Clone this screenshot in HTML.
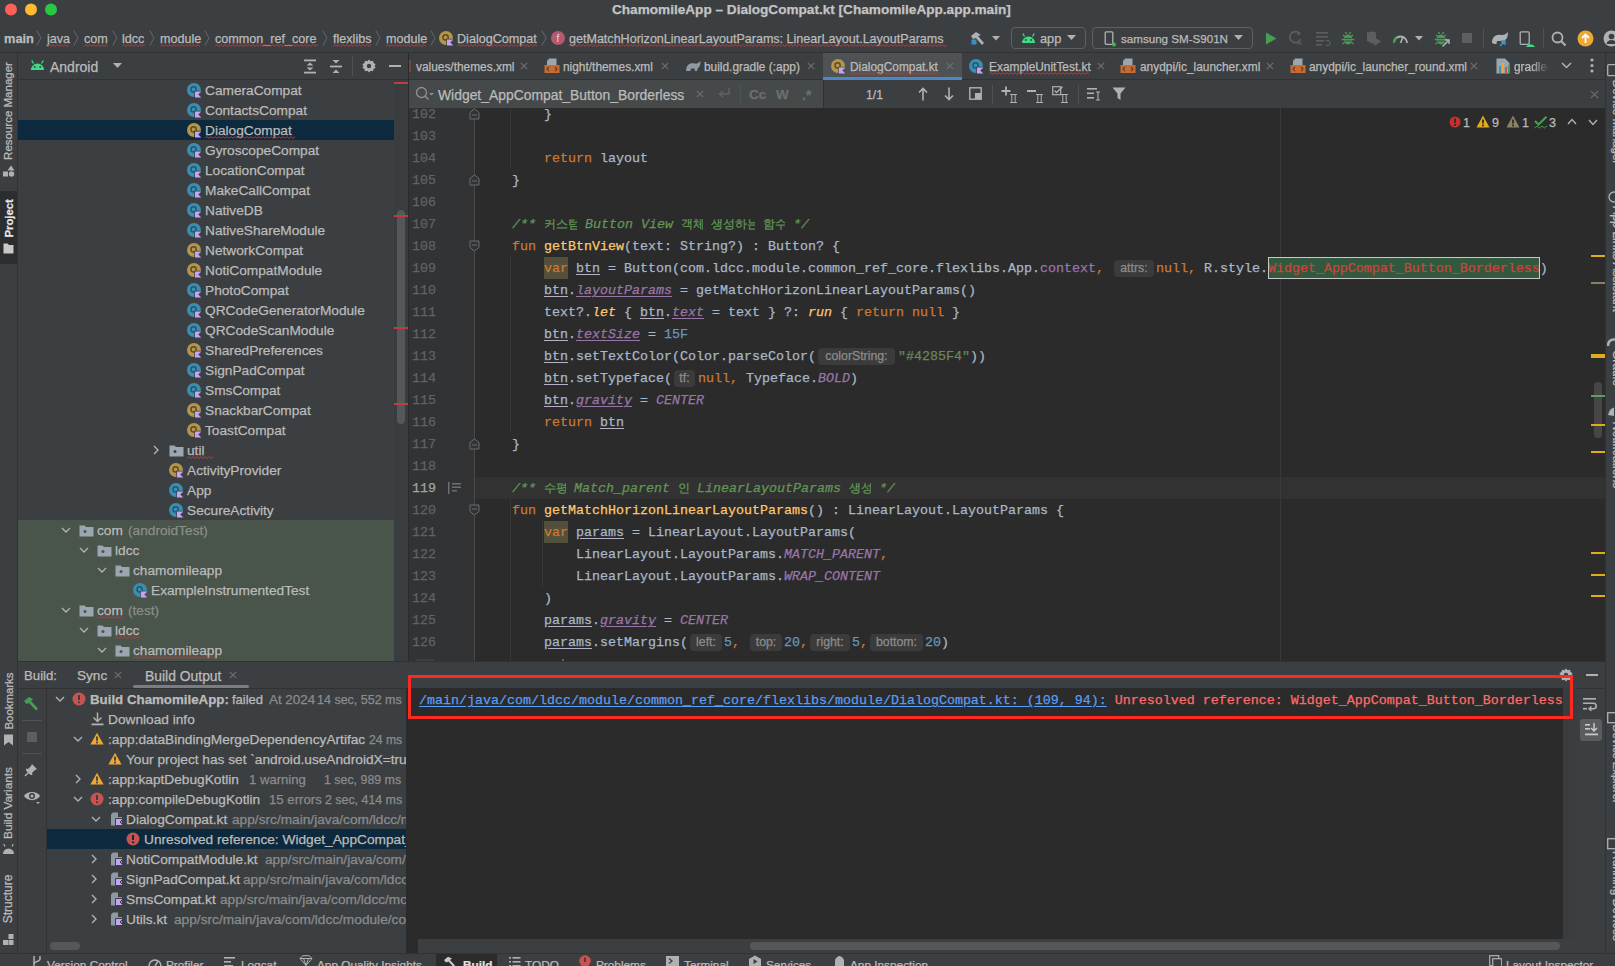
<!DOCTYPE html>
<html><head><meta charset="utf-8"><style>
html,body{margin:0;padding:0}
body{width:1615px;height:966px;overflow:hidden;position:relative;background:#3C3F41;font-family:"Liberation Sans",sans-serif}
body>div,body>svg{position:absolute}
body>div{-webkit-text-stroke:0.25px currentColor}
</style></head><body>
<div style="left:0px;top:52px;width:1615px;height:1px;background:#323232;"></div>
<div style="left:17px;top:53px;width:1px;height:900px;background:#323232;"></div>
<div style="left:18px;top:79px;width:390px;height:1px;background:#323232;"></div>
<div style="left:408px;top:53px;width:1px;height:608px;background:#2B2B2B;"></div>
<div style="left:409px;top:79px;width:1196px;height:1px;background:#323232;"></div>
<div style="left:409px;top:80px;width:414px;height:28px;background:#45494A;"></div>
<div style="left:823px;top:80px;width:1px;height:28px;background:#2F3133;"></div>
<div style="left:409px;top:108px;width:66px;height:553px;background:#313335;"></div>
<div style="left:475px;top:108px;width:1130px;height:553px;background:#2B2B2B;"></div>
<div style="left:1605px;top:53px;width:1px;height:900px;background:#323232;"></div>
<div style="left:18px;top:661px;width:1587px;height:1px;background:#323232;"></div>
<div style="left:46px;top:688px;width:1px;height:265px;background:#323232;"></div>
<div style="left:18px;top:688px;width:1588px;height:1px;background:#323232;"></div>
<div style="left:406px;top:688px;width:1157px;height:251px;background:#2B2B2B;"></div>
<div style="left:406px;top:939px;width:12px;height:14px;background:#2B2B2B;"></div>
<div style="left:1563px;top:688px;width:14px;height:251px;background:#3A3D3F;"></div>
<div style="left:0px;top:953px;width:1615px;height:1px;background:#323232;"></div>
<div style="left:436px;top:954px;width:61px;height:12px;background:#2B2B2B;"></div>
<svg style="left:30px;top:59px;" width="15" height="12" viewBox="0 0 15 12"><path d="M1 11 A6.5 6.5 0 0 1 14 11 Z" fill="#3DDC84"/><path d="M3.5 4.5 L1.8 1.5 M11.5 4.5 L13.2 1.5" stroke="#3DDC84" stroke-width="1.3"/><circle cx="4.8" cy="8" r="0.9" fill="#3C3F41"/><circle cx="10.2" cy="8" r="0.9" fill="#3C3F41"/></svg>
<div style="left:50px;top:57.0px;height:20px;line-height:20px;font-size:14px;color:#BBBBBB;font-weight:normal;font-family:'Liberation Sans', sans-serif;white-space:pre;">Android</div>
<svg style="left:113px;top:63px;" width="10" height="6" viewBox="0 0 10 6"><path d="M0 0 H9 L4.5 5 Z" fill="#AFB1B3"/></svg>
<svg style="left:303px;top:59px;" width="14" height="15" viewBox="0 0 14 15"><rect x="1" y="0.5" width="12" height="1.8" fill="#AFB1B3"/><rect x="1" y="12.7" width="12" height="1.8" fill="#AFB1B3"/><path d="M3.5 6.5 L7 3.5 L10.5 6.5 Z M3.5 8.5 L7 11.5 L10.5 8.5 Z" fill="#AFB1B3"/></svg>
<svg style="left:329px;top:59px;" width="14" height="15" viewBox="0 0 14 15"><rect x="1" y="6.6" width="12" height="1.8" fill="#AFB1B3"/><path d="M3.5 1 H10.5 L7 4.5 Z M3.5 14 H10.5 L7 10.5 Z" fill="#AFB1B3"/></svg>
<div style="left:352px;top:56px;width:1px;height:20px;background:#4E5254;"></div>
<svg style="left:362px;top:59px;" width="14" height="14" viewBox="0 0 14 14"><path d="M7 0.5 L8.6 2.2 L10.9 1.7 L11.6 4 L13.6 5.2 L12.6 7 L13.6 8.8 L11.6 10 L10.9 12.3 L8.6 11.8 L7 13.5 L5.4 11.8 L3.1 12.3 L2.4 10 L0.4 8.8 L1.4 7 L0.4 5.2 L2.4 4 L3.1 1.7 L5.4 2.2 Z" fill="#AFB1B3"/><circle cx="7" cy="7" r="2.2" fill="#3C3F41"/></svg>
<div style="left:389px;top:65px;width:12px;height:2px;background:#AFB1B3;"></div>
<div style="left:18px;top:120px;width:376px;height:20px;background:#0D293E;"></div>
<div style="left:18px;top:520px;width:376px;height:141px;background:#49544A;"></div>
<svg style="left:187px;top:83px;" width="16" height="16" viewBox="0 0 16 16"><circle cx="7" cy="7" r="7" fill="#3B8EB3"/><circle cx="6.6" cy="6.4" r="2.6" fill="none" stroke="#24566B" stroke-width="1.4"/><path d="M7.3 7.7 H15.8 L12.2 11.4 L15.8 15.2 H7.3 Z" fill="#3C3F41"/><path d="M8 8.4 H14.4 L11.2 11.4 L14.4 14.6 H8 Z" fill="#C7A3F7"/></svg>
<div style="left:205px;top:81.0px;height:20px;line-height:20px;font-size:13.7px;color:#BBBBBB;font-weight:normal;font-family:'Liberation Sans', sans-serif;white-space:pre;">CameraCompat</div>
<svg style="left:187px;top:103px;" width="16" height="16" viewBox="0 0 16 16"><circle cx="7" cy="7" r="7" fill="#3B8EB3"/><circle cx="6.6" cy="6.4" r="2.6" fill="none" stroke="#24566B" stroke-width="1.4"/><path d="M7.3 7.7 H15.8 L12.2 11.4 L15.8 15.2 H7.3 Z" fill="#3C3F41"/><path d="M8 8.4 H14.4 L11.2 11.4 L14.4 14.6 H8 Z" fill="#C7A3F7"/></svg>
<div style="left:205px;top:101.0px;height:20px;line-height:20px;font-size:13.7px;color:#BBBBBB;font-weight:normal;font-family:'Liberation Sans', sans-serif;white-space:pre;">ContactsCompat</div>
<svg style="left:187px;top:123px;" width="16" height="16" viewBox="0 0 16 16"><circle cx="7" cy="7" r="7" fill="#B5954C"/><circle cx="6.6" cy="6.4" r="2.6" fill="none" stroke="#5E4B22" stroke-width="1.4"/><path d="M7.3 7.7 H15.8 L12.2 11.4 L15.8 15.2 H7.3 Z" fill="#0D293E"/><path d="M8 8.4 H14.4 L11.2 11.4 L14.4 14.6 H8 Z" fill="#C7A3F7"/></svg>
<div style="left:205px;top:121.0px;height:20px;line-height:20px;font-size:13.7px;color:#BBBBBB;font-weight:normal;font-family:'Liberation Sans', sans-serif;white-space:pre;">DialogCompat</div>
<svg style="left:187px;top:143px;" width="16" height="16" viewBox="0 0 16 16"><circle cx="7" cy="7" r="7" fill="#3B8EB3"/><circle cx="6.6" cy="6.4" r="2.6" fill="none" stroke="#24566B" stroke-width="1.4"/><path d="M7.3 7.7 H15.8 L12.2 11.4 L15.8 15.2 H7.3 Z" fill="#3C3F41"/><path d="M8 8.4 H14.4 L11.2 11.4 L14.4 14.6 H8 Z" fill="#C7A3F7"/></svg>
<div style="left:205px;top:141.0px;height:20px;line-height:20px;font-size:13.7px;color:#BBBBBB;font-weight:normal;font-family:'Liberation Sans', sans-serif;white-space:pre;">GyroscopeCompat</div>
<svg style="left:187px;top:163px;" width="16" height="16" viewBox="0 0 16 16"><circle cx="7" cy="7" r="7" fill="#3B8EB3"/><circle cx="6.6" cy="6.4" r="2.6" fill="none" stroke="#24566B" stroke-width="1.4"/><path d="M7.3 7.7 H15.8 L12.2 11.4 L15.8 15.2 H7.3 Z" fill="#3C3F41"/><path d="M8 8.4 H14.4 L11.2 11.4 L14.4 14.6 H8 Z" fill="#C7A3F7"/></svg>
<div style="left:205px;top:161.0px;height:20px;line-height:20px;font-size:13.7px;color:#BBBBBB;font-weight:normal;font-family:'Liberation Sans', sans-serif;white-space:pre;">LocationCompat</div>
<svg style="left:187px;top:183px;" width="16" height="16" viewBox="0 0 16 16"><circle cx="7" cy="7" r="7" fill="#3B8EB3"/><circle cx="6.6" cy="6.4" r="2.6" fill="none" stroke="#24566B" stroke-width="1.4"/><path d="M7.3 7.7 H15.8 L12.2 11.4 L15.8 15.2 H7.3 Z" fill="#3C3F41"/><path d="M8 8.4 H14.4 L11.2 11.4 L14.4 14.6 H8 Z" fill="#C7A3F7"/></svg>
<div style="left:205px;top:181.0px;height:20px;line-height:20px;font-size:13.7px;color:#BBBBBB;font-weight:normal;font-family:'Liberation Sans', sans-serif;white-space:pre;">MakeCallCompat</div>
<svg style="left:187px;top:203px;" width="16" height="16" viewBox="0 0 16 16"><circle cx="7" cy="7" r="7" fill="#3B8EB3"/><circle cx="6.6" cy="6.4" r="2.6" fill="none" stroke="#24566B" stroke-width="1.4"/><path d="M7.3 7.7 H15.8 L12.2 11.4 L15.8 15.2 H7.3 Z" fill="#3C3F41"/><path d="M8 8.4 H14.4 L11.2 11.4 L14.4 14.6 H8 Z" fill="#C7A3F7"/></svg>
<div style="left:205px;top:201.0px;height:20px;line-height:20px;font-size:13.7px;color:#BBBBBB;font-weight:normal;font-family:'Liberation Sans', sans-serif;white-space:pre;">NativeDB</div>
<svg style="left:187px;top:223px;" width="16" height="16" viewBox="0 0 16 16"><circle cx="7" cy="7" r="7" fill="#3B8EB3"/><circle cx="6.6" cy="6.4" r="2.6" fill="none" stroke="#24566B" stroke-width="1.4"/><path d="M7.3 7.7 H15.8 L12.2 11.4 L15.8 15.2 H7.3 Z" fill="#3C3F41"/><path d="M8 8.4 H14.4 L11.2 11.4 L14.4 14.6 H8 Z" fill="#C7A3F7"/></svg>
<div style="left:205px;top:221.0px;height:20px;line-height:20px;font-size:13.7px;color:#BBBBBB;font-weight:normal;font-family:'Liberation Sans', sans-serif;white-space:pre;">NativeShareModule</div>
<svg style="left:187px;top:243px;" width="16" height="16" viewBox="0 0 16 16"><circle cx="7" cy="7" r="7" fill="#B5954C"/><circle cx="6.6" cy="6.4" r="2.6" fill="none" stroke="#5E4B22" stroke-width="1.4"/><path d="M7.3 7.7 H15.8 L12.2 11.4 L15.8 15.2 H7.3 Z" fill="#3C3F41"/><path d="M8 8.4 H14.4 L11.2 11.4 L14.4 14.6 H8 Z" fill="#C7A3F7"/></svg>
<div style="left:205px;top:241.0px;height:20px;line-height:20px;font-size:13.7px;color:#BBBBBB;font-weight:normal;font-family:'Liberation Sans', sans-serif;white-space:pre;">NetworkCompat</div>
<svg style="left:187px;top:263px;" width="16" height="16" viewBox="0 0 16 16"><circle cx="7" cy="7" r="7" fill="#B5954C"/><circle cx="6.6" cy="6.4" r="2.6" fill="none" stroke="#5E4B22" stroke-width="1.4"/><path d="M7.3 7.7 H15.8 L12.2 11.4 L15.8 15.2 H7.3 Z" fill="#3C3F41"/><path d="M8 8.4 H14.4 L11.2 11.4 L14.4 14.6 H8 Z" fill="#C7A3F7"/></svg>
<div style="left:205px;top:261.0px;height:20px;line-height:20px;font-size:13.7px;color:#BBBBBB;font-weight:normal;font-family:'Liberation Sans', sans-serif;white-space:pre;">NotiCompatModule</div>
<svg style="left:187px;top:283px;" width="16" height="16" viewBox="0 0 16 16"><circle cx="7" cy="7" r="7" fill="#3B8EB3"/><circle cx="6.6" cy="6.4" r="2.6" fill="none" stroke="#24566B" stroke-width="1.4"/><path d="M7.3 7.7 H15.8 L12.2 11.4 L15.8 15.2 H7.3 Z" fill="#3C3F41"/><path d="M8 8.4 H14.4 L11.2 11.4 L14.4 14.6 H8 Z" fill="#C7A3F7"/></svg>
<div style="left:205px;top:281.0px;height:20px;line-height:20px;font-size:13.7px;color:#BBBBBB;font-weight:normal;font-family:'Liberation Sans', sans-serif;white-space:pre;">PhotoCompat</div>
<svg style="left:187px;top:303px;" width="16" height="16" viewBox="0 0 16 16"><circle cx="7" cy="7" r="7" fill="#3B8EB3"/><circle cx="6.6" cy="6.4" r="2.6" fill="none" stroke="#24566B" stroke-width="1.4"/><path d="M7.3 7.7 H15.8 L12.2 11.4 L15.8 15.2 H7.3 Z" fill="#3C3F41"/><path d="M8 8.4 H14.4 L11.2 11.4 L14.4 14.6 H8 Z" fill="#C7A3F7"/></svg>
<div style="left:205px;top:301.0px;height:20px;line-height:20px;font-size:13.7px;color:#BBBBBB;font-weight:normal;font-family:'Liberation Sans', sans-serif;white-space:pre;">QRCodeGeneratorModule</div>
<svg style="left:187px;top:323px;" width="16" height="16" viewBox="0 0 16 16"><circle cx="7" cy="7" r="7" fill="#3B8EB3"/><circle cx="6.6" cy="6.4" r="2.6" fill="none" stroke="#24566B" stroke-width="1.4"/><path d="M7.3 7.7 H15.8 L12.2 11.4 L15.8 15.2 H7.3 Z" fill="#3C3F41"/><path d="M8 8.4 H14.4 L11.2 11.4 L14.4 14.6 H8 Z" fill="#C7A3F7"/></svg>
<div style="left:205px;top:321.0px;height:20px;line-height:20px;font-size:13.7px;color:#BBBBBB;font-weight:normal;font-family:'Liberation Sans', sans-serif;white-space:pre;">QRCodeScanModule</div>
<svg style="left:187px;top:343px;" width="16" height="16" viewBox="0 0 16 16"><circle cx="7" cy="7" r="7" fill="#B5954C"/><circle cx="6.6" cy="6.4" r="2.6" fill="none" stroke="#5E4B22" stroke-width="1.4"/><path d="M7.3 7.7 H15.8 L12.2 11.4 L15.8 15.2 H7.3 Z" fill="#3C3F41"/><path d="M8 8.4 H14.4 L11.2 11.4 L14.4 14.6 H8 Z" fill="#C7A3F7"/></svg>
<div style="left:205px;top:341.0px;height:20px;line-height:20px;font-size:13.7px;color:#BBBBBB;font-weight:normal;font-family:'Liberation Sans', sans-serif;white-space:pre;">SharedPreferences</div>
<svg style="left:187px;top:363px;" width="16" height="16" viewBox="0 0 16 16"><circle cx="7" cy="7" r="7" fill="#3B8EB3"/><circle cx="6.6" cy="6.4" r="2.6" fill="none" stroke="#24566B" stroke-width="1.4"/><path d="M7.3 7.7 H15.8 L12.2 11.4 L15.8 15.2 H7.3 Z" fill="#3C3F41"/><path d="M8 8.4 H14.4 L11.2 11.4 L14.4 14.6 H8 Z" fill="#C7A3F7"/></svg>
<div style="left:205px;top:361.0px;height:20px;line-height:20px;font-size:13.7px;color:#BBBBBB;font-weight:normal;font-family:'Liberation Sans', sans-serif;white-space:pre;">SignPadCompat</div>
<svg style="left:187px;top:383px;" width="16" height="16" viewBox="0 0 16 16"><circle cx="7" cy="7" r="7" fill="#3B8EB3"/><circle cx="6.6" cy="6.4" r="2.6" fill="none" stroke="#24566B" stroke-width="1.4"/><path d="M7.3 7.7 H15.8 L12.2 11.4 L15.8 15.2 H7.3 Z" fill="#3C3F41"/><path d="M8 8.4 H14.4 L11.2 11.4 L14.4 14.6 H8 Z" fill="#C7A3F7"/></svg>
<div style="left:205px;top:381.0px;height:20px;line-height:20px;font-size:13.7px;color:#BBBBBB;font-weight:normal;font-family:'Liberation Sans', sans-serif;white-space:pre;">SmsCompat</div>
<svg style="left:187px;top:403px;" width="16" height="16" viewBox="0 0 16 16"><circle cx="7" cy="7" r="7" fill="#B5954C"/><circle cx="6.6" cy="6.4" r="2.6" fill="none" stroke="#5E4B22" stroke-width="1.4"/><path d="M7.3 7.7 H15.8 L12.2 11.4 L15.8 15.2 H7.3 Z" fill="#3C3F41"/><path d="M8 8.4 H14.4 L11.2 11.4 L14.4 14.6 H8 Z" fill="#C7A3F7"/></svg>
<div style="left:205px;top:401.0px;height:20px;line-height:20px;font-size:13.7px;color:#BBBBBB;font-weight:normal;font-family:'Liberation Sans', sans-serif;white-space:pre;">SnackbarCompat</div>
<svg style="left:187px;top:423px;" width="16" height="16" viewBox="0 0 16 16"><circle cx="7" cy="7" r="7" fill="#B5954C"/><circle cx="6.6" cy="6.4" r="2.6" fill="none" stroke="#5E4B22" stroke-width="1.4"/><path d="M7.3 7.7 H15.8 L12.2 11.4 L15.8 15.2 H7.3 Z" fill="#3C3F41"/><path d="M8 8.4 H14.4 L11.2 11.4 L14.4 14.6 H8 Z" fill="#C7A3F7"/></svg>
<div style="left:205px;top:421.0px;height:20px;line-height:20px;font-size:13.7px;color:#BBBBBB;font-weight:normal;font-family:'Liberation Sans', sans-serif;white-space:pre;">ToastCompat</div>
<svg style="left:205px;top:136px;" width="90" height="3" viewBox="0 0 90 3"><path d="M0 2.5 L2 0.5 L4 2.5 L6 0.5 L8 2.5 L10 0.5 L12 2.5 L14 0.5 L16 2.5 L18 0.5 L20 2.5 L22 0.5 L24 2.5 L26 0.5 L28 2.5 L30 0.5 L32 2.5 L34 0.5 L36 2.5 L38 0.5 L40 2.5 L42 0.5 L44 2.5 L46 0.5 L48 2.5 L50 0.5 L52 2.5 L54 0.5 L56 2.5 L58 0.5 L60 2.5 L62 0.5 L64 2.5 L66 0.5 L68 2.5 L70 0.5 L72 2.5 L74 0.5 L76 2.5 L78 0.5 L80 2.5 L82 0.5 L84 2.5 L86 0.5 L88 2.5 L90 0.5 L92 2.5" fill="none" stroke="#BC3F3C" stroke-width="1"/></svg>
<svg style="left:153px;top:445px;" width="7" height="10" viewBox="0 0 7 10"><path d="M1 1 L5 5 L1 9" fill="none" stroke="#AFB1B3" stroke-width="1.4"/></svg>
<svg style="left:169px;top:444px;" width="15" height="13" viewBox="0 0 15 13"><path d="M0.5 1.5 H5.5 L7 3 H14.5 V12.5 H0.5 Z" fill="#9AA7B0"/><circle cx="6" cy="7.5" r="1.5" fill="#3C3F41"/></svg>
<div style="left:187px;top:441.0px;height:20px;line-height:20px;font-size:13.7px;color:#BBBBBB;font-weight:normal;font-family:'Liberation Sans', sans-serif;white-space:pre;">util</div>
<svg style="left:187px;top:456px;" width="26" height="3" viewBox="0 0 26 3"><path d="M0 2.5 L2 0.5 L4 2.5 L6 0.5 L8 2.5 L10 0.5 L12 2.5 L14 0.5 L16 2.5 L18 0.5 L20 2.5 L22 0.5 L24 2.5 L26 0.5 L28 2.5" fill="none" stroke="#BC3F3C" stroke-width="1"/></svg>
<svg style="left:169px;top:463px;" width="16" height="16" viewBox="0 0 16 16"><circle cx="7" cy="7" r="7" fill="#B5954C"/><circle cx="6.6" cy="6.4" r="2.6" fill="none" stroke="#5E4B22" stroke-width="1.4"/><path d="M7.3 7.7 H15.8 L12.2 11.4 L15.8 15.2 H7.3 Z" fill="#3C3F41"/><path d="M8 8.4 H14.4 L11.2 11.4 L14.4 14.6 H8 Z" fill="#C7A3F7"/></svg>
<div style="left:187px;top:461.0px;height:20px;line-height:20px;font-size:13.7px;color:#BBBBBB;font-weight:normal;font-family:'Liberation Sans', sans-serif;white-space:pre;">ActivityProvider</div>
<svg style="left:169px;top:483px;" width="16" height="16" viewBox="0 0 16 16"><circle cx="7" cy="7" r="7" fill="#3B8EB3"/><circle cx="6.6" cy="6.4" r="2.6" fill="none" stroke="#24566B" stroke-width="1.4"/><path d="M7.3 7.7 H15.8 L12.2 11.4 L15.8 15.2 H7.3 Z" fill="#3C3F41"/><path d="M8 8.4 H14.4 L11.2 11.4 L14.4 14.6 H8 Z" fill="#C7A3F7"/></svg>
<div style="left:187px;top:481.0px;height:20px;line-height:20px;font-size:13.7px;color:#BBBBBB;font-weight:normal;font-family:'Liberation Sans', sans-serif;white-space:pre;">App</div>
<svg style="left:169px;top:503px;" width="16" height="16" viewBox="0 0 16 16"><circle cx="7" cy="7" r="7" fill="#3B8EB3"/><circle cx="6.6" cy="6.4" r="2.6" fill="none" stroke="#24566B" stroke-width="1.4"/><path d="M7.3 7.7 H15.8 L12.2 11.4 L15.8 15.2 H7.3 Z" fill="#3C3F41"/><path d="M8 8.4 H14.4 L11.2 11.4 L14.4 14.6 H8 Z" fill="#C7A3F7"/></svg>
<div style="left:187px;top:501.0px;height:20px;line-height:20px;font-size:13.7px;color:#BBBBBB;font-weight:normal;font-family:'Liberation Sans', sans-serif;white-space:pre;">SecureActivity</div>
<svg style="left:61px;top:527px;" width="10" height="7" viewBox="0 0 10 7"><path d="M1 1 L5 5 L9 1" fill="none" stroke="#AFB1B3" stroke-width="1.4"/></svg>
<svg style="left:79px;top:524px;" width="15" height="13" viewBox="0 0 15 13"><path d="M0.5 1.5 H5.5 L7 3 H14.5 V12.5 H0.5 Z" fill="#9AA7B0"/><circle cx="6" cy="7.5" r="1.5" fill="#49544A"/></svg>
<div style="left:97px;top:521.0px;height:20px;line-height:20px;font-size:13.7px;color:#BBBBBB;font-weight:normal;font-family:'Liberation Sans', sans-serif;white-space:pre;">com</div>
<div style="left:128px;top:521.0px;height:20px;line-height:20px;font-size:13.7px;color:#8A8F8B;font-weight:normal;font-family:'Liberation Sans', sans-serif;white-space:pre;">(androidTest)</div>
<svg style="left:79px;top:547px;" width="10" height="7" viewBox="0 0 10 7"><path d="M1 1 L5 5 L9 1" fill="none" stroke="#AFB1B3" stroke-width="1.4"/></svg>
<svg style="left:97px;top:544px;" width="15" height="13" viewBox="0 0 15 13"><path d="M0.5 1.5 H5.5 L7 3 H14.5 V12.5 H0.5 Z" fill="#9AA7B0"/><circle cx="6" cy="7.5" r="1.5" fill="#49544A"/></svg>
<div style="left:115px;top:541.0px;height:20px;line-height:20px;font-size:13.7px;color:#BBBBBB;font-weight:normal;font-family:'Liberation Sans', sans-serif;white-space:pre;">ldcc</div>
<svg style="left:97px;top:567px;" width="10" height="7" viewBox="0 0 10 7"><path d="M1 1 L5 5 L9 1" fill="none" stroke="#AFB1B3" stroke-width="1.4"/></svg>
<svg style="left:115px;top:564px;" width="15" height="13" viewBox="0 0 15 13"><path d="M0.5 1.5 H5.5 L7 3 H14.5 V12.5 H0.5 Z" fill="#9AA7B0"/><circle cx="6" cy="7.5" r="1.5" fill="#49544A"/></svg>
<div style="left:133px;top:561.0px;height:20px;line-height:20px;font-size:13.7px;color:#BBBBBB;font-weight:normal;font-family:'Liberation Sans', sans-serif;white-space:pre;">chamomileapp</div>
<svg style="left:133px;top:583px;" width="16" height="16" viewBox="0 0 16 16"><circle cx="7" cy="7" r="7" fill="#3B8EB3"/><circle cx="6.6" cy="6.4" r="2.6" fill="none" stroke="#24566B" stroke-width="1.4"/><path d="M7.3 7.7 H15.8 L12.2 11.4 L15.8 15.2 H7.3 Z" fill="#49544A"/><path d="M8 8.4 H14.4 L11.2 11.4 L14.4 14.6 H8 Z" fill="#C7A3F7"/></svg>
<div style="left:151px;top:581.0px;height:20px;line-height:20px;font-size:13.7px;color:#BBBBBB;font-weight:normal;font-family:'Liberation Sans', sans-serif;white-space:pre;">ExampleInstrumentedTest</div>
<svg style="left:61px;top:607px;" width="10" height="7" viewBox="0 0 10 7"><path d="M1 1 L5 5 L9 1" fill="none" stroke="#AFB1B3" stroke-width="1.4"/></svg>
<svg style="left:79px;top:604px;" width="15" height="13" viewBox="0 0 15 13"><path d="M0.5 1.5 H5.5 L7 3 H14.5 V12.5 H0.5 Z" fill="#9AA7B0"/><circle cx="6" cy="7.5" r="1.5" fill="#49544A"/></svg>
<div style="left:97px;top:601.0px;height:20px;line-height:20px;font-size:13.7px;color:#BBBBBB;font-weight:normal;font-family:'Liberation Sans', sans-serif;white-space:pre;">com</div>
<div style="left:128px;top:601.0px;height:20px;line-height:20px;font-size:13.7px;color:#8A8F8B;font-weight:normal;font-family:'Liberation Sans', sans-serif;white-space:pre;">(test)</div>
<svg style="left:97px;top:616px;" width="26" height="3" viewBox="0 0 26 3"><path d="M0 2.5 L2 0.5 L4 2.5 L6 0.5 L8 2.5 L10 0.5 L12 2.5 L14 0.5 L16 2.5 L18 0.5 L20 2.5 L22 0.5 L24 2.5 L26 0.5 L28 2.5" fill="none" stroke="#BC3F3C" stroke-width="1"/></svg>
<svg style="left:79px;top:627px;" width="10" height="7" viewBox="0 0 10 7"><path d="M1 1 L5 5 L9 1" fill="none" stroke="#AFB1B3" stroke-width="1.4"/></svg>
<svg style="left:97px;top:624px;" width="15" height="13" viewBox="0 0 15 13"><path d="M0.5 1.5 H5.5 L7 3 H14.5 V12.5 H0.5 Z" fill="#9AA7B0"/><circle cx="6" cy="7.5" r="1.5" fill="#49544A"/></svg>
<div style="left:115px;top:621.0px;height:20px;line-height:20px;font-size:13.7px;color:#BBBBBB;font-weight:normal;font-family:'Liberation Sans', sans-serif;white-space:pre;">ldcc</div>
<svg style="left:115px;top:636px;" width="26" height="3" viewBox="0 0 26 3"><path d="M0 2.5 L2 0.5 L4 2.5 L6 0.5 L8 2.5 L10 0.5 L12 2.5 L14 0.5 L16 2.5 L18 0.5 L20 2.5 L22 0.5 L24 2.5 L26 0.5 L28 2.5" fill="none" stroke="#BC3F3C" stroke-width="1"/></svg>
<svg style="left:97px;top:647px;" width="10" height="7" viewBox="0 0 10 7"><path d="M1 1 L5 5 L9 1" fill="none" stroke="#AFB1B3" stroke-width="1.4"/></svg>
<svg style="left:115px;top:644px;" width="15" height="13" viewBox="0 0 15 13"><path d="M0.5 1.5 H5.5 L7 3 H14.5 V12.5 H0.5 Z" fill="#9AA7B0"/><circle cx="6" cy="7.5" r="1.5" fill="#49544A"/></svg>
<div style="left:133px;top:641.0px;height:20px;line-height:20px;font-size:13.7px;color:#BBBBBB;font-weight:normal;font-family:'Liberation Sans', sans-serif;white-space:pre;">chamomileapp</div>
<svg style="left:133px;top:656px;" width="82" height="3" viewBox="0 0 82 3"><path d="M0 2.5 L2 0.5 L4 2.5 L6 0.5 L8 2.5 L10 0.5 L12 2.5 L14 0.5 L16 2.5 L18 0.5 L20 2.5 L22 0.5 L24 2.5 L26 0.5 L28 2.5 L30 0.5 L32 2.5 L34 0.5 L36 2.5 L38 0.5 L40 2.5 L42 0.5 L44 2.5 L46 0.5 L48 2.5 L50 0.5 L52 2.5 L54 0.5 L56 2.5 L58 0.5 L60 2.5 L62 0.5 L64 2.5 L66 0.5 L68 2.5 L70 0.5 L72 2.5 L74 0.5 L76 2.5 L78 0.5 L80 2.5 L82 0.5 L84 2.5" fill="none" stroke="#BC3F3C" stroke-width="1"/></svg>
<div style="left:394px;top:80px;width:14px;height:581px;background:#3A3D3F;"></div>
<div style="left:397px;top:210px;width:8px;height:214px;background:#55585A;border-radius:4px"></div>
<div style="left:394px;top:82px;width:14px;height:2px;background:#BC3F3C;"></div>
<div style="left:394px;top:215px;width:14px;height:2px;background:#BC3F3C;"></div>
<div style="left:394px;top:327px;width:14px;height:2px;background:#BC3F3C;"></div>
<div style="left:394px;top:403px;width:14px;height:2px;background:#BC3F3C;"></div>
<svg style="left:4px;top:3px;" width="54" height="13" viewBox="0 0 54 13"><circle cx="7" cy="6.5" r="6" fill="#FF5F57"/><circle cx="27" cy="6.5" r="6" fill="#FEBC2E"/><circle cx="47" cy="6.5" r="6" fill="#28C840"/></svg>
<div style="left:612px;top:1.0px;height:18px;line-height:18px;font-size:13.6px;color:#C4C4C4;font-weight:bold;font-family:'Liberation Sans', sans-serif;white-space:pre;">ChamomileApp – DialogCompat.kt [ChamomileApp.app.main]</div>
<div style="left:4px;top:29.0px;height:20px;line-height:20px;font-size:12.8px;color:#BBBBBB;font-weight:bold;font-family:'Liberation Sans', sans-serif;white-space:pre;">main</div>
<svg style="left:36px;top:30px;" width="6" height="16" viewBox="0 0 6 16"><path d="M0.8 0.5 L5 8 L0.8 15.5" fill="none" stroke="#6A6D70" stroke-width="0.9"/></svg>
<div style="left:47px;top:29.0px;height:20px;line-height:20px;font-size:12.6px;color:#BBBBBB;font-weight:normal;font-family:'Liberation Sans', sans-serif;white-space:pre;">java</div>
<svg style="left:47px;top:44px;" width="22" height="3" viewBox="0 0 22 3"><path d="M0 2.5 L2 0.5 L4 2.5 L6 0.5 L8 2.5 L10 0.5 L12 2.5 L14 0.5 L16 2.5 L18 0.5 L20 2.5 L22 0.5 L24 2.5" fill="none" stroke="#BC3F3C" stroke-width="1"/></svg>
<svg style="left:73px;top:30px;" width="6" height="16" viewBox="0 0 6 16"><path d="M0.8 0.5 L5 8 L0.8 15.5" fill="none" stroke="#6A6D70" stroke-width="0.9"/></svg>
<div style="left:84px;top:29.0px;height:20px;line-height:20px;font-size:12.6px;color:#BBBBBB;font-weight:normal;font-family:'Liberation Sans', sans-serif;white-space:pre;">com</div>
<svg style="left:84px;top:44px;" width="24" height="3" viewBox="0 0 24 3"><path d="M0 2.5 L2 0.5 L4 2.5 L6 0.5 L8 2.5 L10 0.5 L12 2.5 L14 0.5 L16 2.5 L18 0.5 L20 2.5 L22 0.5 L24 2.5 L26 0.5 L28 2.5" fill="none" stroke="#BC3F3C" stroke-width="1"/></svg>
<svg style="left:112px;top:30px;" width="6" height="16" viewBox="0 0 6 16"><path d="M0.8 0.5 L5 8 L0.8 15.5" fill="none" stroke="#6A6D70" stroke-width="0.9"/></svg>
<div style="left:122px;top:29.0px;height:20px;line-height:20px;font-size:12.6px;color:#BBBBBB;font-weight:normal;font-family:'Liberation Sans', sans-serif;white-space:pre;">ldcc</div>
<svg style="left:122px;top:44px;" width="23" height="3" viewBox="0 0 23 3"><path d="M0 2.5 L2 0.5 L4 2.5 L6 0.5 L8 2.5 L10 0.5 L12 2.5 L14 0.5 L16 2.5 L18 0.5 L20 2.5 L22 0.5 L24 2.5" fill="none" stroke="#BC3F3C" stroke-width="1"/></svg>
<svg style="left:149px;top:30px;" width="6" height="16" viewBox="0 0 6 16"><path d="M0.8 0.5 L5 8 L0.8 15.5" fill="none" stroke="#6A6D70" stroke-width="0.9"/></svg>
<div style="left:160px;top:29.0px;height:20px;line-height:20px;font-size:12.6px;color:#BBBBBB;font-weight:normal;font-family:'Liberation Sans', sans-serif;white-space:pre;">module</div>
<svg style="left:160px;top:44px;" width="40" height="3" viewBox="0 0 40 3"><path d="M0 2.5 L2 0.5 L4 2.5 L6 0.5 L8 2.5 L10 0.5 L12 2.5 L14 0.5 L16 2.5 L18 0.5 L20 2.5 L22 0.5 L24 2.5 L26 0.5 L28 2.5 L30 0.5 L32 2.5 L34 0.5 L36 2.5 L38 0.5 L40 2.5 L42 0.5 L44 2.5" fill="none" stroke="#BC3F3C" stroke-width="1"/></svg>
<svg style="left:204px;top:30px;" width="6" height="16" viewBox="0 0 6 16"><path d="M0.8 0.5 L5 8 L0.8 15.5" fill="none" stroke="#6A6D70" stroke-width="0.9"/></svg>
<div style="left:215px;top:29.0px;height:20px;line-height:20px;font-size:12.6px;color:#BBBBBB;font-weight:normal;font-family:'Liberation Sans', sans-serif;white-space:pre;">common_ref_core</div>
<svg style="left:215px;top:44px;" width="103" height="3" viewBox="0 0 103 3"><path d="M0 2.5 L2 0.5 L4 2.5 L6 0.5 L8 2.5 L10 0.5 L12 2.5 L14 0.5 L16 2.5 L18 0.5 L20 2.5 L22 0.5 L24 2.5 L26 0.5 L28 2.5 L30 0.5 L32 2.5 L34 0.5 L36 2.5 L38 0.5 L40 2.5 L42 0.5 L44 2.5 L46 0.5 L48 2.5 L50 0.5 L52 2.5 L54 0.5 L56 2.5 L58 0.5 L60 2.5 L62 0.5 L64 2.5 L66 0.5 L68 2.5 L70 0.5 L72 2.5 L74 0.5 L76 2.5 L78 0.5 L80 2.5 L82 0.5 L84 2.5 L86 0.5 L88 2.5 L90 0.5 L92 2.5 L94 0.5 L96 2.5 L98 0.5 L100 2.5 L102 0.5 L104 2.5" fill="none" stroke="#BC3F3C" stroke-width="1"/></svg>
<svg style="left:322px;top:30px;" width="6" height="16" viewBox="0 0 6 16"><path d="M0.8 0.5 L5 8 L0.8 15.5" fill="none" stroke="#6A6D70" stroke-width="0.9"/></svg>
<div style="left:333px;top:29.0px;height:20px;line-height:20px;font-size:12.6px;color:#BBBBBB;font-weight:normal;font-family:'Liberation Sans', sans-serif;white-space:pre;">flexlibs</div>
<svg style="left:333px;top:44px;" width="38" height="3" viewBox="0 0 38 3"><path d="M0 2.5 L2 0.5 L4 2.5 L6 0.5 L8 2.5 L10 0.5 L12 2.5 L14 0.5 L16 2.5 L18 0.5 L20 2.5 L22 0.5 L24 2.5 L26 0.5 L28 2.5 L30 0.5 L32 2.5 L34 0.5 L36 2.5 L38 0.5 L40 2.5" fill="none" stroke="#BC3F3C" stroke-width="1"/></svg>
<svg style="left:375px;top:30px;" width="6" height="16" viewBox="0 0 6 16"><path d="M0.8 0.5 L5 8 L0.8 15.5" fill="none" stroke="#6A6D70" stroke-width="0.9"/></svg>
<div style="left:386px;top:29.0px;height:20px;line-height:20px;font-size:12.6px;color:#BBBBBB;font-weight:normal;font-family:'Liberation Sans', sans-serif;white-space:pre;">module</div>
<svg style="left:386px;top:44px;" width="40" height="3" viewBox="0 0 40 3"><path d="M0 2.5 L2 0.5 L4 2.5 L6 0.5 L8 2.5 L10 0.5 L12 2.5 L14 0.5 L16 2.5 L18 0.5 L20 2.5 L22 0.5 L24 2.5 L26 0.5 L28 2.5 L30 0.5 L32 2.5 L34 0.5 L36 2.5 L38 0.5 L40 2.5 L42 0.5 L44 2.5" fill="none" stroke="#BC3F3C" stroke-width="1"/></svg>
<svg style="left:430px;top:30px;" width="6" height="16" viewBox="0 0 6 16"><path d="M0.8 0.5 L5 8 L0.8 15.5" fill="none" stroke="#6A6D70" stroke-width="0.9"/></svg>
<svg style="left:439px;top:31px;" width="16" height="16" viewBox="0 0 16 16"><circle cx="7" cy="7" r="7" fill="#B5954C"/><circle cx="6.6" cy="6.4" r="2.6" fill="none" stroke="#5E4B22" stroke-width="1.4"/><path d="M7.3 7.7 H15.8 L12.2 11.4 L15.8 15.2 H7.3 Z" fill="#3C3F41"/><path d="M8 8.4 H14.4 L11.2 11.4 L14.4 14.6 H8 Z" fill="#C7A3F7"/></svg>
<div style="left:457px;top:29.0px;height:20px;line-height:20px;font-size:12.6px;color:#BBBBBB;font-weight:normal;font-family:'Liberation Sans', sans-serif;white-space:pre;">DialogCompat</div>
<svg style="left:457px;top:44px;" width="80" height="3" viewBox="0 0 80 3"><path d="M0 2.5 L2 0.5 L4 2.5 L6 0.5 L8 2.5 L10 0.5 L12 2.5 L14 0.5 L16 2.5 L18 0.5 L20 2.5 L22 0.5 L24 2.5 L26 0.5 L28 2.5 L30 0.5 L32 2.5 L34 0.5 L36 2.5 L38 0.5 L40 2.5 L42 0.5 L44 2.5 L46 0.5 L48 2.5 L50 0.5 L52 2.5 L54 0.5 L56 2.5 L58 0.5 L60 2.5 L62 0.5 L64 2.5 L66 0.5 L68 2.5 L70 0.5 L72 2.5 L74 0.5 L76 2.5 L78 0.5 L80 2.5 L82 0.5 L84 2.5" fill="none" stroke="#BC3F3C" stroke-width="1"/></svg>
<svg style="left:541px;top:30px;" width="6" height="16" viewBox="0 0 6 16"><path d="M0.8 0.5 L5 8 L0.8 15.5" fill="none" stroke="#6A6D70" stroke-width="0.9"/></svg>
<svg style="left:551px;top:31px;" width="14" height="14" viewBox="0 0 14 14"><circle cx="7" cy="7" r="7" fill="#B35A6E"/><text x="7" y="10.8" font-family="Liberation Sans" font-size="10" fill="#F2D2DA" text-anchor="middle">f</text></svg>
<div style="left:569px;top:29.0px;height:20px;line-height:20px;font-size:12.55px;color:#BBBBBB;font-weight:normal;font-family:'Liberation Sans', sans-serif;white-space:pre;">getMatchHorizonLinearLayoutParams: LinearLayout.LayoutParams</div>
<svg style="left:569px;top:44px;" width="378" height="3" viewBox="0 0 378 3"><path d="M0 2.5 L2 0.5 L4 2.5 L6 0.5 L8 2.5 L10 0.5 L12 2.5 L14 0.5 L16 2.5 L18 0.5 L20 2.5 L22 0.5 L24 2.5 L26 0.5 L28 2.5 L30 0.5 L32 2.5 L34 0.5 L36 2.5 L38 0.5 L40 2.5 L42 0.5 L44 2.5 L46 0.5 L48 2.5 L50 0.5 L52 2.5 L54 0.5 L56 2.5 L58 0.5 L60 2.5 L62 0.5 L64 2.5 L66 0.5 L68 2.5 L70 0.5 L72 2.5 L74 0.5 L76 2.5 L78 0.5 L80 2.5 L82 0.5 L84 2.5 L86 0.5 L88 2.5 L90 0.5 L92 2.5 L94 0.5 L96 2.5 L98 0.5 L100 2.5 L102 0.5 L104 2.5 L106 0.5 L108 2.5 L110 0.5 L112 2.5 L114 0.5 L116 2.5 L118 0.5 L120 2.5 L122 0.5 L124 2.5 L126 0.5 L128 2.5 L130 0.5 L132 2.5 L134 0.5 L136 2.5 L138 0.5 L140 2.5 L142 0.5 L144 2.5 L146 0.5 L148 2.5 L150 0.5 L152 2.5 L154 0.5 L156 2.5 L158 0.5 L160 2.5 L162 0.5 L164 2.5 L166 0.5 L168 2.5 L170 0.5 L172 2.5 L174 0.5 L176 2.5 L178 0.5 L180 2.5 L182 0.5 L184 2.5 L186 0.5 L188 2.5 L190 0.5 L192 2.5 L194 0.5 L196 2.5 L198 0.5 L200 2.5 L202 0.5 L204 2.5 L206 0.5 L208 2.5 L210 0.5 L212 2.5 L214 0.5 L216 2.5 L218 0.5 L220 2.5 L222 0.5 L224 2.5 L226 0.5 L228 2.5 L230 0.5 L232 2.5 L234 0.5 L236 2.5 L238 0.5 L240 2.5 L242 0.5 L244 2.5 L246 0.5 L248 2.5 L250 0.5 L252 2.5 L254 0.5 L256 2.5 L258 0.5 L260 2.5 L262 0.5 L264 2.5 L266 0.5 L268 2.5 L270 0.5 L272 2.5 L274 0.5 L276 2.5 L278 0.5 L280 2.5 L282 0.5 L284 2.5 L286 0.5 L288 2.5 L290 0.5 L292 2.5 L294 0.5 L296 2.5 L298 0.5 L300 2.5 L302 0.5 L304 2.5 L306 0.5 L308 2.5 L310 0.5 L312 2.5 L314 0.5 L316 2.5 L318 0.5 L320 2.5 L322 0.5 L324 2.5 L326 0.5 L328 2.5 L330 0.5 L332 2.5 L334 0.5 L336 2.5 L338 0.5 L340 2.5 L342 0.5 L344 2.5 L346 0.5 L348 2.5 L350 0.5 L352 2.5 L354 0.5 L356 2.5 L358 0.5 L360 2.5 L362 0.5 L364 2.5 L366 0.5 L368 2.5 L370 0.5 L372 2.5 L374 0.5 L376 2.5 L378 0.5 L380 2.5" fill="none" stroke="#BC3F3C" stroke-width="1"/></svg>
<svg style="left:969px;top:31px;" width="18" height="16" viewBox="0 0 18 16"><path d="M2 5 L7 1 L12 4 L9 5 L15 12 L13 14 L7 7 L4 8 Z" fill="#AFB1B3"/><rect x="2.5" y="8.5" width="5" height="5" fill="#3592C4"/></svg>
<svg style="left:992px;top:36px;" width="9" height="6" viewBox="0 0 9 6"><path d="M0 0 H8 L4 4.5 Z" fill="#AFB1B3"/></svg>
<div style="left:1011px;top:27px;width:75px;height:22px;background:transparent;box-sizing:border-box;border:1px solid #5E6163;border-radius:4px"></div>
<svg style="left:1021px;top:32px;" width="15" height="12" viewBox="0 0 15 12"><path d="M1 11 A6.5 6.5 0 0 1 14 11 Z" fill="#3DDC84"/><path d="M3.5 4.5 L1.8 1.5 M11.5 4.5 L13.2 1.5" stroke="#3DDC84" stroke-width="1.3"/><circle cx="4.8" cy="8" r="0.9" fill="#3C3F41"/><circle cx="10.2" cy="8" r="0.9" fill="#3C3F41"/></svg>
<div style="left:1040px;top:29.0px;height:20px;line-height:20px;font-size:12.8px;color:#BBBBBB;font-weight:normal;font-family:'Liberation Sans', sans-serif;white-space:pre;">app</div>
<svg style="left:1067px;top:35px;" width="10" height="6" viewBox="0 0 10 6"><path d="M0 0 H9 L4.5 5 Z" fill="#AFB1B3"/></svg>
<div style="left:1092px;top:27px;width:161px;height:22px;background:transparent;box-sizing:border-box;border:1px solid #5E6163;border-radius:4px"></div>
<svg style="left:1104px;top:31px;" width="12" height="16" viewBox="0 0 12 16"><rect x="1.2" y="0.8" width="7.6" height="12.5" rx="1" fill="none" stroke="#AFB1B3" stroke-width="1.3"/><circle cx="10" cy="13.5" r="2" fill="#28C840"/></svg>
<div style="left:1121px;top:29.0px;height:20px;line-height:20px;font-size:11.6px;color:#BBBBBB;font-weight:normal;font-family:'Liberation Sans', sans-serif;white-space:pre;">samsung SM-S901N</div>
<svg style="left:1234px;top:35px;" width="10" height="6" viewBox="0 0 10 6"><path d="M0 0 H9 L4.5 5 Z" fill="#AFB1B3"/></svg>
<svg style="left:1265px;top:32px;" width="12" height="13" viewBox="0 0 12 13"><path d="M1 0.5 L11.5 6.5 L1 12.5 Z" fill="#499C54"/></svg>
<svg style="left:1288px;top:30px;" width="16" height="16" viewBox="0 0 16 16"><path d="M11 3 A5.5 5.5 0 1 0 12.5 9" fill="none" stroke="#5C5F61" stroke-width="1.6"/><path d="M9 1 L13 3 L10 6 Z" fill="#5C5F61"/><text x="9" y="15" font-size="7" fill="#5C5F61" font-family="Liberation Sans">A</text></svg>
<svg style="left:1315px;top:31px;" width="16" height="15" viewBox="0 0 16 15"><rect x="1" y="1" width="12" height="1.6" fill="#5C5F61"/><rect x="1" y="5" width="12" height="1.6" fill="#5C5F61"/><rect x="1" y="9" width="8" height="1.6" fill="#5C5F61"/><rect x="1" y="13" width="6" height="1.6" fill="#5C5F61"/><path d="M11 10 A2.5 2.5 0 1 1 11 14" fill="none" stroke="#5C5F61" stroke-width="1.2"/></svg>
<svg style="left:1341px;top:31px;" width="14" height="15" viewBox="0 0 14 15"><ellipse cx="7" cy="8.5" rx="4.2" ry="5" fill="#499C54"/><path d="M2 4 L4 5.5 M12 4 L10 5.5 M0.8 8.5 H3 M11 8.5 H13.2 M1.5 13 L3.5 11.5 M12.5 13 L10.5 11.5 M4.5 1 L5.5 3 M9.5 1 L8.5 3" stroke="#499C54" stroke-width="1.4"/><path d="M3.5 7.5 H10.5 M3.5 10 H10.5" stroke="#3C3F41" stroke-width="0.9"/></svg>
<svg style="left:1366px;top:31px;" width="17" height="15" viewBox="0 0 17 15"><path d="M1 1.5 L7 0.5 L10 1.5 V9 L7 13 L1 10 Z" fill="#5C5F61"/><path d="M8 6 L15 10.5 L8 15 Z" fill="#5C5F61"/></svg>
<svg style="left:1392px;top:32px;" width="17" height="12" viewBox="0 0 17 12"><path d="M2 11 A6.5 6.5 0 0 1 15 11" fill="none" stroke="#AFB1B3" stroke-width="1.8"/><path d="M2 11 A6.5 6.5 0 0 1 4.5 5" fill="none" stroke="#499C54" stroke-width="1.8"/><path d="M8.5 11 L11 5" stroke="#AFB1B3" stroke-width="1.6"/></svg>
<svg style="left:1415px;top:36px;" width="9" height="6" viewBox="0 0 9 6"><path d="M0 0 H8 L4 4.5 Z" fill="#AFB1B3"/></svg>
<svg style="left:1434px;top:31px;" width="14" height="15" viewBox="0 0 14 15"><ellipse cx="7" cy="8.5" rx="4.2" ry="5" fill="#499C54"/><path d="M2 4 L4 5.5 M12 4 L10 5.5 M0.8 8.5 H3 M11 8.5 H13.2 M1.5 13 L3.5 11.5 M12.5 13 L10.5 11.5 M4.5 1 L5.5 3 M9.5 1 L8.5 3" stroke="#499C54" stroke-width="1.4"/><path d="M3.5 7.5 H10.5 M3.5 10 H10.5" stroke="#3C3F41" stroke-width="0.9"/></svg>
<svg style="left:1441px;top:38px;" width="10" height="10" viewBox="0 0 10 10"><path d="M1.5 8.5 L8 2 M4 2 H8 V6" fill="none" stroke="#AFB1B3" stroke-width="1.5"/></svg>
<div style="left:1462px;top:33px;width:10px;height:10px;background:#5C5F61;"></div>
<div style="left:1483px;top:28px;width:1px;height:20px;background:#4E5254;"></div>
<svg style="left:1491px;top:31px;" width="19" height="16" viewBox="0 0 19 16"><path d="M1 12 C1 6 5 3 10 4 C13 4.5 15 3 17 1 C17 5 16 8 14 9 L13 13 H11 L10.5 10 H6 L5.5 13 H3.5 Z" fill="#AFB1B3"/><path d="M9 15 L14 10 M10 10 H14 V14" fill="none" stroke="#3592C4" stroke-width="1.6"/></svg>
<svg style="left:1519px;top:31px;" width="17" height="16" viewBox="0 0 17 16"><rect x="1.2" y="0.8" width="9" height="12.5" rx="1" fill="none" stroke="#AFB1B3" stroke-width="1.3"/><path d="M7 16 A5 5 0 0 1 16 16 Z" fill="#3DDC84"/></svg>
<div style="left:1543px;top:28px;width:1px;height:20px;background:#4E5254;"></div>
<svg style="left:1551px;top:31px;" width="16" height="16" viewBox="0 0 16 16"><circle cx="6.5" cy="6.5" r="5" fill="none" stroke="#AFB1B3" stroke-width="1.8"/><path d="M10 10 L14.5 14.5" stroke="#AFB1B3" stroke-width="2"/></svg>
<svg style="left:1577px;top:30px;" width="17" height="17" viewBox="0 0 17 17"><circle cx="8.5" cy="8.5" r="8" fill="#F0A732"/><path d="M8.5 13 V5 M5 8 L8.5 4.5 L12 8" fill="none" stroke="#FFFFFF" stroke-width="1.8"/></svg>
<svg style="left:1603px;top:30px;" width="12" height="17" viewBox="0 0 12 17"><circle cx="8.5" cy="8.5" r="8" fill="#AFB1B3"/><circle cx="8.5" cy="6.5" r="2.8" fill="#3C3F41"/><path d="M3.5 14 A5 4 0 0 1 13.5 14" fill="#3C3F41"/></svg>
<div style="left:409px;top:60px;width:2px;height:12px;background:#6B4A36;"></div>
<div style="left:416px;top:57.0px;height:20px;line-height:20px;font-size:11.9px;color:#BBBBBB;font-weight:normal;font-family:'Liberation Sans', sans-serif;white-space:pre;">values/themes.xml</div>
<svg style="left:520px;top:62px;" width="8" height="8" viewBox="0 0 8 8"><path d="M0.8 0.8 L7.2 7.2 M7.2 0.8 L0.8 7.2" stroke="#6C7073" stroke-width="1.1"/></svg>
<svg style="left:544px;top:58px;" width="16" height="15" viewBox="0 0 16 15"><path d="M5 0.5 H12.5 V7 H3 V2.5 Z" fill="#9AA7B0"/><path d="M3 2.5 H5 V0.5 Z" fill="#6E7B84"/><rect x="0.5" y="7" width="15" height="8" fill="#CC6A2E"/><path d="M5 8.8 L3 11 L5 13.2 M11 8.8 L13 11 L11 13.2" fill="none" stroke="#3C3F41" stroke-width="1.1"/></svg>
<div style="left:563px;top:57.0px;height:20px;line-height:20px;font-size:11.9px;color:#BBBBBB;font-weight:normal;font-family:'Liberation Sans', sans-serif;white-space:pre;">night/themes.xml</div>
<svg style="left:661px;top:62px;" width="8" height="8" viewBox="0 0 8 8"><path d="M0.8 0.8 L7.2 7.2 M7.2 0.8 L0.8 7.2" stroke="#6C7073" stroke-width="1.1"/></svg>
<svg style="left:685px;top:60px;" width="16" height="12" viewBox="0 0 16 12"><path d="M1 11 C1 5 5 2.5 9.5 3.5 C12 4 13.5 3 15.5 1 C15.5 5 14.5 7 13 8 L12 11 H10 L9.5 8.5 H6 L5.5 11 H3.5 Z" fill="#8E9AA3"/></svg>
<div style="left:704px;top:57.0px;height:20px;line-height:20px;font-size:11.9px;color:#BBBBBB;font-weight:normal;font-family:'Liberation Sans', sans-serif;white-space:pre;">build.gradle (:app)</div>
<svg style="left:807px;top:62px;" width="8" height="8" viewBox="0 0 8 8"><path d="M0.8 0.8 L7.2 7.2 M7.2 0.8 L0.8 7.2" stroke="#6C7073" stroke-width="1.1"/></svg>
<div style="left:823px;top:53px;width:139px;height:24px;background:#4E5254;"></div>
<svg style="left:831px;top:59px;" width="16" height="16" viewBox="0 0 16 16"><circle cx="7" cy="7" r="7" fill="#B5954C"/><circle cx="6.6" cy="6.4" r="2.6" fill="none" stroke="#5E4B22" stroke-width="1.4"/><path d="M7.3 7.7 H15.8 L12.2 11.4 L15.8 15.2 H7.3 Z" fill="#4E5254"/><path d="M8 8.4 H14.4 L11.2 11.4 L14.4 14.6 H8 Z" fill="#C7A3F7"/></svg>
<div style="left:850px;top:57.0px;height:20px;line-height:20px;font-size:11.9px;color:#BBBBBB;font-weight:normal;font-family:'Liberation Sans', sans-serif;white-space:pre;">DialogCompat.kt</div>
<svg style="left:850px;top:72px;" width="89" height="3" viewBox="0 0 89 3"><path d="M0 2.5 L2 0.5 L4 2.5 L6 0.5 L8 2.5 L10 0.5 L12 2.5 L14 0.5 L16 2.5 L18 0.5 L20 2.5 L22 0.5 L24 2.5 L26 0.5 L28 2.5 L30 0.5 L32 2.5 L34 0.5 L36 2.5 L38 0.5 L40 2.5 L42 0.5 L44 2.5 L46 0.5 L48 2.5 L50 0.5 L52 2.5 L54 0.5 L56 2.5 L58 0.5 L60 2.5 L62 0.5 L64 2.5 L66 0.5 L68 2.5 L70 0.5 L72 2.5 L74 0.5 L76 2.5 L78 0.5 L80 2.5 L82 0.5 L84 2.5 L86 0.5 L88 2.5 L90 0.5 L92 2.5" fill="none" stroke="#BC3F3C" stroke-width="1"/></svg>
<svg style="left:946px;top:62px;" width="8" height="8" viewBox="0 0 8 8"><path d="M0.8 0.8 L7.2 7.2 M7.2 0.8 L0.8 7.2" stroke="#6C7073" stroke-width="1.1"/></svg>
<div style="left:823px;top:77px;width:139px;height:3px;background:#4A88C7;"></div>
<svg style="left:969px;top:59px;" width="16" height="16" viewBox="0 0 16 16"><circle cx="7" cy="7" r="7" fill="#3B8EB3"/><circle cx="6.6" cy="6.4" r="2.6" fill="none" stroke="#24566B" stroke-width="1.4"/><path d="M7.3 7.7 H15.8 L12.2 11.4 L15.8 15.2 H7.3 Z" fill="#3C3F41"/><path d="M8 8.4 H14.4 L11.2 11.4 L14.4 14.6 H8 Z" fill="#C7A3F7"/></svg>
<div style="left:989px;top:57.0px;height:20px;line-height:20px;font-size:11.9px;color:#BBBBBB;font-weight:normal;font-family:'Liberation Sans', sans-serif;white-space:pre;">ExampleUnitTest.kt</div>
<svg style="left:989px;top:72px;" width="100" height="3" viewBox="0 0 100 3"><path d="M0 2.5 L2 0.5 L4 2.5 L6 0.5 L8 2.5 L10 0.5 L12 2.5 L14 0.5 L16 2.5 L18 0.5 L20 2.5 L22 0.5 L24 2.5 L26 0.5 L28 2.5 L30 0.5 L32 2.5 L34 0.5 L36 2.5 L38 0.5 L40 2.5 L42 0.5 L44 2.5 L46 0.5 L48 2.5 L50 0.5 L52 2.5 L54 0.5 L56 2.5 L58 0.5 L60 2.5 L62 0.5 L64 2.5 L66 0.5 L68 2.5 L70 0.5 L72 2.5 L74 0.5 L76 2.5 L78 0.5 L80 2.5 L82 0.5 L84 2.5 L86 0.5 L88 2.5 L90 0.5 L92 2.5 L94 0.5 L96 2.5 L98 0.5 L100 2.5 L102 0.5 L104 2.5" fill="none" stroke="#BC3F3C" stroke-width="1"/></svg>
<svg style="left:1097px;top:62px;" width="8" height="8" viewBox="0 0 8 8"><path d="M0.8 0.8 L7.2 7.2 M7.2 0.8 L0.8 7.2" stroke="#6C7073" stroke-width="1.1"/></svg>
<svg style="left:1120px;top:58px;" width="16" height="15" viewBox="0 0 16 15"><path d="M5 0.5 H12.5 V7 H3 V2.5 Z" fill="#9AA7B0"/><path d="M3 2.5 H5 V0.5 Z" fill="#6E7B84"/><rect x="0.5" y="7" width="15" height="8" fill="#CC6A2E"/><path d="M5 8.8 L3 11 L5 13.2 M11 8.8 L13 11 L11 13.2" fill="none" stroke="#3C3F41" stroke-width="1.1"/></svg>
<div style="left:1140px;top:57.0px;height:20px;line-height:20px;font-size:11.9px;color:#BBBBBB;font-weight:normal;font-family:'Liberation Sans', sans-serif;white-space:pre;">anydpi/ic_launcher.xml</div>
<svg style="left:1266px;top:62px;" width="8" height="8" viewBox="0 0 8 8"><path d="M0.8 0.8 L7.2 7.2 M7.2 0.8 L0.8 7.2" stroke="#6C7073" stroke-width="1.1"/></svg>
<svg style="left:1290px;top:58px;" width="16" height="15" viewBox="0 0 16 15"><path d="M5 0.5 H12.5 V7 H3 V2.5 Z" fill="#9AA7B0"/><path d="M3 2.5 H5 V0.5 Z" fill="#6E7B84"/><rect x="0.5" y="7" width="15" height="8" fill="#CC6A2E"/><path d="M5 8.8 L3 11 L5 13.2 M11 8.8 L13 11 L11 13.2" fill="none" stroke="#3C3F41" stroke-width="1.1"/></svg>
<div style="left:1309px;top:57.0px;height:20px;line-height:20px;font-size:11.9px;color:#BBBBBB;font-weight:normal;font-family:'Liberation Sans', sans-serif;white-space:pre;">anydpi/ic_launcher_round.xml</div>
<svg style="left:1470px;top:62px;" width="8" height="8" viewBox="0 0 8 8"><path d="M0.8 0.8 L7.2 7.2 M7.2 0.8 L0.8 7.2" stroke="#6C7073" stroke-width="1.1"/></svg>
<svg style="left:1496px;top:58px;" width="15" height="16" viewBox="0 0 15 16"><path d="M0.5 0.5 H9 L13.5 5 V15.5 H0.5 Z" fill="#9AA7B0"/><rect x="3" y="8" width="2" height="7" fill="#3592C4"/><rect x="6" y="5" width="2" height="10" fill="#F0A732"/><rect x="9" y="9" width="2" height="6" fill="#C75450"/><rect x="12" y="7" width="2" height="8" fill="#499C54"/></svg>
<div style="left:1514px;top:57.0px;height:20px;line-height:20px;font-size:11.9px;color:#BBBBBB;font-weight:normal;font-family:'Liberation Sans', sans-serif;white-space:pre;width:36px;overflow:hidden;-webkit-mask-image:linear-gradient(90deg,#000 50%,transparent)">gradle-</div>
<svg style="left:1561px;top:62px;" width="11" height="7" viewBox="0 0 11 7"><path d="M1 1 L5.5 5.5 L10 1" fill="none" stroke="#AFB1B3" stroke-width="1.5"/></svg>
<svg style="left:1590px;top:58px;" width="4" height="15" viewBox="0 0 4 15"><circle cx="2" cy="2" r="1.6" fill="#AFB1B3"/><circle cx="2" cy="7.5" r="1.6" fill="#AFB1B3"/><circle cx="2" cy="13" r="1.6" fill="#AFB1B3"/></svg>
<svg style="left:415px;top:86px;" width="20" height="16" viewBox="0 0 20 16"><circle cx="6.5" cy="6.5" r="5" fill="none" stroke="#8C9093" stroke-width="1.3"/><path d="M10 10 L13.5 13.5" stroke="#8C9093" stroke-width="1.5"/><path d="M14 7 H19 L16.5 9.5 Z" fill="#8C9093"/></svg>
<div style="left:438px;top:85.0px;height:20px;line-height:20px;font-size:13.9px;color:#BBBBBB;font-weight:normal;font-family:'Liberation Sans', sans-serif;white-space:pre;">Widget_AppCompat_Button_Borderless</div>
<svg style="left:696px;top:90px;" width="8" height="8" viewBox="0 0 8 8"><path d="M0.8 0.8 L7.2 7.2 M7.2 0.8 L0.8 7.2" stroke="#6C7073" stroke-width="1.1"/></svg>
<svg style="left:717px;top:87px;" width="15" height="14" viewBox="0 0 15 14"><path d="M12 1 V7 H3" fill="none" stroke="#5F6366" stroke-width="1.4"/><path d="M6 4 L2.5 7 L6 10" fill="none" stroke="#5F6366" stroke-width="1.4"/></svg>
<div style="left:740px;top:85px;width:1px;height:19px;background:#505355;"></div>
<div style="left:749px;top:85.0px;height:20px;line-height:20px;font-size:13.5px;color:#6A6E71;font-weight:bold;font-family:'Liberation Sans', sans-serif;white-space:pre;">Cc</div>
<div style="left:776px;top:85.0px;height:20px;line-height:20px;font-size:13.5px;color:#6A6E71;font-weight:bold;font-family:'Liberation Sans', sans-serif;white-space:pre;">W</div>
<div style="left:802px;top:85.0px;height:20px;line-height:20px;font-size:14px;color:#6A6E71;font-weight:bold;font-family:'Liberation Sans', sans-serif;white-space:pre;">.*</div>
<div style="left:866px;top:85.0px;height:20px;line-height:20px;font-size:12.2px;color:#BBBBBB;font-weight:normal;font-family:'Liberation Sans', sans-serif;white-space:pre;">1/1</div>
<svg style="left:918px;top:87px;" width="10" height="14" viewBox="0 0 10 14"><path d="M5 13.5 V1.5 M1 5.5 L5 1.5 L9 5.5" fill="none" stroke="#AFB1B3" stroke-width="1.6"/></svg>
<svg style="left:944px;top:87px;" width="10" height="14" viewBox="0 0 10 14"><path d="M5 0.5 V12.5 M1 8.5 L5 12.5 L9 8.5" fill="none" stroke="#AFB1B3" stroke-width="1.6"/></svg>
<svg style="left:969px;top:87px;" width="13" height="13" viewBox="0 0 13 13"><rect x="0.8" y="0.8" width="11.4" height="11.4" fill="none" stroke="#AFB1B3" stroke-width="1.4"/><rect x="6" y="6" width="6" height="6" fill="#AFB1B3"/></svg>
<div style="left:992px;top:85px;width:1px;height:19px;background:#505355;"></div>
<svg style="left:1001px;top:86px;" width="10" height="10" viewBox="0 0 10 10"><path d="M5 0.5 V9.5 M0.5 5 H9.5" stroke="#AFB1B3" stroke-width="1.8"/></svg>
<svg style="left:1009px;top:94px;" width="9" height="9" viewBox="0 0 9 9"><path d="M1 0.5 H8 M1 8.5 H8 M2.8 0.5 V8.5 M6.2 0.5 V8.5" stroke="#AFB1B3" stroke-width="1"/></svg>
<div style="left:1027px;top:90px;width:9px;height:2px;background:#AFB1B3;"></div>
<svg style="left:1035px;top:94px;" width="9" height="9" viewBox="0 0 9 9"><path d="M1 0.5 H8 M1 8.5 H8 M2.8 0.5 V8.5 M6.2 0.5 V8.5" stroke="#AFB1B3" stroke-width="1"/></svg>
<svg style="left:1052px;top:86px;" width="12" height="10" viewBox="0 0 12 10"><rect x="0.7" y="0.7" width="8" height="8" fill="none" stroke="#AFB1B3" stroke-width="1.2"/><path d="M2.5 4.5 L4.5 6.5 L10.5 0.8" fill="none" stroke="#AFB1B3" stroke-width="1.3"/></svg>
<svg style="left:1060px;top:94px;" width="9" height="9" viewBox="0 0 9 9"><path d="M1 0.5 H8 M1 8.5 H8 M2.8 0.5 V8.5 M6.2 0.5 V8.5" stroke="#AFB1B3" stroke-width="1"/></svg>
<div style="left:1078px;top:85px;width:1px;height:19px;background:#505355;"></div>
<svg style="left:1087px;top:87px;" width="14" height="14" viewBox="0 0 14 14"><rect x="0" y="1" width="10" height="1.6" fill="#AFB1B3"/><rect x="0" y="5.5" width="7" height="1.6" fill="#AFB1B3"/><rect x="0" y="10" width="7" height="1.6" fill="#AFB1B3"/><path d="M9 5 H13 M9 13 H13 M11 5 V13" stroke="#AFB1B3" stroke-width="1.1"/></svg>
<svg style="left:1112px;top:87px;" width="14" height="14" viewBox="0 0 14 14"><path d="M0.5 0.5 H13.5 L8.5 6.5 V13 L5.5 11 V6.5 Z" fill="#AFB1B3"/></svg>
<svg style="left:1590px;top:90px;" width="9" height="9" viewBox="0 0 9 9"><path d="M0.8 0.8 L8.2 8.2 M8.2 0.8 L0.8 8.2" stroke="#6C7073" stroke-width="1.1"/></svg>
<div style="left:409px;top:477px;width:66px;height:22px;background:#313335;"></div>
<div style="left:475px;top:477px;width:1130px;height:22px;background:#323232;"></div>
<div style="left:1280px;top:108px;width:1px;height:553px;background:#3A3A3A;"></div>
<div style="left:474px;top:108px;width:1px;height:553px;background:#4A4A4A;"></div>
<div style="left:510px;top:108px;width:1px;height:61px;background:#393939;"></div>
<div style="left:510px;top:257px;width:1px;height:176px;background:#393939;"></div>
<div style="left:510px;top:499px;width:1px;height:162px;background:#393939;"></div>
<div style="left:542px;top:521px;width:1px;height:66px;background:#393939;"></div>
<svg style="left:469px;top:108px;" width="11" height="12" viewBox="0 0 11 12"><path d="M1 11 V4.5 L5.5 0.8 L10 4.5 V11 Z" fill="#313335" stroke="#6C6C6C" stroke-width="1"/><path d="M3 7 H8" stroke="#6C6C6C" stroke-width="1"/></svg>
<svg style="left:469px;top:174px;" width="11" height="12" viewBox="0 0 11 12"><path d="M1 11 V4.5 L5.5 0.8 L10 4.5 V11 Z" fill="#313335" stroke="#6C6C6C" stroke-width="1"/><path d="M3 7 H8" stroke="#6C6C6C" stroke-width="1"/></svg>
<svg style="left:469px;top:240px;" width="11" height="12" viewBox="0 0 11 12"><path d="M1 1 V7.5 L5.5 11.2 L10 7.5 V1 Z" fill="#313335" stroke="#6C6C6C" stroke-width="1"/><path d="M3 5 H8" stroke="#6C6C6C" stroke-width="1"/></svg>
<svg style="left:469px;top:438px;" width="11" height="12" viewBox="0 0 11 12"><path d="M1 11 V4.5 L5.5 0.8 L10 4.5 V11 Z" fill="#313335" stroke="#6C6C6C" stroke-width="1"/><path d="M3 7 H8" stroke="#6C6C6C" stroke-width="1"/></svg>
<svg style="left:469px;top:504px;" width="11" height="12" viewBox="0 0 11 12"><path d="M1 1 V7.5 L5.5 11.2 L10 7.5 V1 Z" fill="#313335" stroke="#6C6C6C" stroke-width="1"/><path d="M3 5 H8" stroke="#6C6C6C" stroke-width="1"/></svg>
<svg style="left:448px;top:482px;" width="13" height="12" viewBox="0 0 13 12"><rect x="0" y="0" width="1.5" height="12" fill="#6C7073"/><rect x="4" y="1" width="9" height="1.5" fill="#6C7073"/><rect x="4" y="4.5" width="9" height="1.5" fill="#6C7073"/><rect x="4" y="8" width="5" height="1.5" fill="#6C7073"/></svg>
<div style="left:480px;top:104px;height:22px;line-height:22px;font-family:'Liberation Mono', monospace;font-size:13.33px;color:#A9B7C6;white-space:pre"><span style="color:#A9B7C6;">        }</span></div>
<div style="left:480px;top:148px;height:22px;line-height:22px;font-family:'Liberation Mono', monospace;font-size:13.33px;color:#A9B7C6;white-space:pre"><span style="color:#A9B7C6;">        </span><span style="color:#CC7832;">return</span><span style="color:#A9B7C6;"> layout</span></div>
<div style="left:480px;top:170px;height:22px;line-height:22px;font-family:'Liberation Mono', monospace;font-size:13.33px;color:#A9B7C6;white-space:pre"><span style="color:#A9B7C6;">    }</span></div>
<div style="left:480px;top:214px;height:22px;line-height:22px;font-family:'Liberation Mono', monospace;font-size:13.33px;color:#A9B7C6;white-space:pre"><span style="color:#629755;font-style:italic;">    /** </span><span style="display:inline-block;width:33px;font-size:11.5px;font-style:normal;overflow:hidden;vertical-align:top;color:#629755">커스텀</span><span style="color:#629755;font-style:italic;"> Button View </span><span style="display:inline-block;width:22px;font-size:11.5px;font-style:normal;overflow:hidden;vertical-align:top;color:#629755">객체</span><span style="color:#629755;"> </span><span style="display:inline-block;width:44px;font-size:11.5px;font-style:normal;overflow:hidden;vertical-align:top;color:#629755">생성하는</span><span style="color:#629755;"> </span><span style="display:inline-block;width:22px;font-size:11.5px;font-style:normal;overflow:hidden;vertical-align:top;color:#629755">함수</span><span style="color:#629755;font-style:italic;"> */</span></div>
<div style="left:480px;top:236px;height:22px;line-height:22px;font-family:'Liberation Mono', monospace;font-size:13.33px;color:#A9B7C6;white-space:pre"><span style="color:#A9B7C6;">    </span><span style="color:#CC7832;">fun</span><span style="color:#A9B7C6;"> </span><span style="color:#FFC66D;">getBtnView</span><span style="color:#A9B7C6;">(text: String?) : Button? {</span></div>
<div style="left:480px;top:258px;height:22px;line-height:22px;font-family:'Liberation Mono', monospace;font-size:13.33px;color:#A9B7C6;white-space:pre"><span style="color:#A9B7C6;">        </span><span style="color:#CC7832;background:#52503A;display:inline-block;height:22px;vertical-align:top;position:relative;top:-1px;line-height:23px;">var</span><span style="color:#A9B7C6;"> </span><span style="color:#A9B7C6;text-decoration:underline;text-underline-offset:2px;text-decoration-color:#B8B0C8;">btn</span><span style="color:#A9B7C6;"> = Button(com.ldcc.module.common_ref_core.flexlibs.App.</span><span style="color:#9876AA;">context</span><span style="color:#CC7832;">,</span><span style="color:#A9B7C6;"> </span><span style="display:inline-block;vertical-align:top;margin:1.5px 2px 0 2px;width:40px;height:17px;line-height:17px;border-radius:4px;background:#3B3B3B;color:#8C8C8C;font-family:'Liberation Sans', sans-serif;font-size:12.3px;text-align:center">attrs:</span><span style="color:#CC7832;">null</span><span style="color:#CC7832;">,</span><span style="color:#A9B7C6;"> R.style.</span><span style="color:#A9B7C6;color:#D2413A;background:#32593D;outline:1.5px solid #C8C8C8;outline-offset:-1.5px;display:inline-block;height:22px;vertical-align:top;position:relative;top:-1px;line-height:23px;">Widget_AppCompat_Button_Borderless</span><span style="color:#A9B7C6;">)</span></div>
<div style="left:480px;top:280px;height:22px;line-height:22px;font-family:'Liberation Mono', monospace;font-size:13.33px;color:#A9B7C6;white-space:pre"><span style="color:#A9B7C6;">        </span><span style="color:#A9B7C6;text-decoration:underline;text-underline-offset:2px;text-decoration-color:#B8B0C8;">btn</span><span style="color:#A9B7C6;">.</span><span style="color:#9876AA;font-style:italic;text-decoration:underline;text-underline-offset:2px;text-decoration-color:#9876AA;">layoutParams</span><span style="color:#A9B7C6;"> = getMatchHorizonLinearLayoutParams()</span></div>
<div style="left:480px;top:302px;height:22px;line-height:22px;font-family:'Liberation Mono', monospace;font-size:13.33px;color:#A9B7C6;white-space:pre"><span style="color:#A9B7C6;">        </span><span style="color:#A9B7C6;">text?.</span><span style="color:#FFC66D;font-style:italic;">let</span><span style="color:#A9B7C6;"> { </span><span style="color:#A9B7C6;text-decoration:underline;text-underline-offset:2px;text-decoration-color:#B8B0C8;">btn</span><span style="color:#A9B7C6;">.</span><span style="color:#9876AA;font-style:italic;text-decoration:underline;text-underline-offset:2px;text-decoration-color:#9876AA;">text</span><span style="color:#A9B7C6;"> = text } ?: </span><span style="color:#FFC66D;font-style:italic;">run</span><span style="color:#A9B7C6;"> { </span><span style="color:#CC7832;">return</span><span style="color:#A9B7C6;"> </span><span style="color:#CC7832;">null</span><span style="color:#A9B7C6;"> }</span></div>
<div style="left:480px;top:324px;height:22px;line-height:22px;font-family:'Liberation Mono', monospace;font-size:13.33px;color:#A9B7C6;white-space:pre"><span style="color:#A9B7C6;">        </span><span style="color:#A9B7C6;text-decoration:underline;text-underline-offset:2px;text-decoration-color:#B8B0C8;">btn</span><span style="color:#A9B7C6;">.</span><span style="color:#9876AA;font-style:italic;text-decoration:underline;text-underline-offset:2px;text-decoration-color:#9876AA;">textSize</span><span style="color:#A9B7C6;"> = </span><span style="color:#6897BB;">15F</span></div>
<div style="left:480px;top:346px;height:22px;line-height:22px;font-family:'Liberation Mono', monospace;font-size:13.33px;color:#A9B7C6;white-space:pre"><span style="color:#A9B7C6;">        </span><span style="color:#A9B7C6;text-decoration:underline;text-underline-offset:2px;text-decoration-color:#B8B0C8;">btn</span><span style="color:#A9B7C6;">.setTextColor(Color.parseColor(</span><span style="display:inline-block;vertical-align:top;margin:1.5px 3px 0 2px;width:77px;height:17px;line-height:17px;border-radius:4px;background:#3B3B3B;color:#8C8C8C;font-family:'Liberation Sans', sans-serif;font-size:12.3px;text-align:center">colorString:</span><span style="color:#6A8759;">&quot;#4285F4&quot;</span><span style="color:#A9B7C6;">))</span></div>
<div style="left:480px;top:368px;height:22px;line-height:22px;font-family:'Liberation Mono', monospace;font-size:13.33px;color:#A9B7C6;white-space:pre"><span style="color:#A9B7C6;">        </span><span style="color:#A9B7C6;text-decoration:underline;text-underline-offset:2px;text-decoration-color:#B8B0C8;">btn</span><span style="color:#A9B7C6;">.setTypeface(</span><span style="display:inline-block;vertical-align:top;margin:1.5px 3px 0 2px;width:21px;height:17px;line-height:17px;border-radius:4px;background:#3B3B3B;color:#8C8C8C;font-family:'Liberation Sans', sans-serif;font-size:12.3px;text-align:center">tf:</span><span style="color:#CC7832;">null</span><span style="color:#CC7832;">,</span><span style="color:#A9B7C6;"> Typeface.</span><span style="color:#9876AA;font-style:italic;">BOLD</span><span style="color:#A9B7C6;">)</span></div>
<div style="left:480px;top:390px;height:22px;line-height:22px;font-family:'Liberation Mono', monospace;font-size:13.33px;color:#A9B7C6;white-space:pre"><span style="color:#A9B7C6;">        </span><span style="color:#A9B7C6;text-decoration:underline;text-underline-offset:2px;text-decoration-color:#B8B0C8;">btn</span><span style="color:#A9B7C6;">.</span><span style="color:#9876AA;font-style:italic;text-decoration:underline;text-underline-offset:2px;text-decoration-color:#9876AA;">gravity</span><span style="color:#A9B7C6;"> = </span><span style="color:#9876AA;font-style:italic;">CENTER</span></div>
<div style="left:480px;top:412px;height:22px;line-height:22px;font-family:'Liberation Mono', monospace;font-size:13.33px;color:#A9B7C6;white-space:pre"><span style="color:#A9B7C6;">        </span><span style="color:#CC7832;">return</span><span style="color:#A9B7C6;"> </span><span style="color:#A9B7C6;text-decoration:underline;text-underline-offset:2px;text-decoration-color:#B8B0C8;">btn</span></div>
<div style="left:480px;top:434px;height:22px;line-height:22px;font-family:'Liberation Mono', monospace;font-size:13.33px;color:#A9B7C6;white-space:pre"><span style="color:#A9B7C6;">    }</span></div>
<div style="left:480px;top:478px;height:22px;line-height:22px;font-family:'Liberation Mono', monospace;font-size:13.33px;color:#A9B7C6;white-space:pre"><span style="color:#629755;font-style:italic;">    /** </span><span style="display:inline-block;width:22px;font-size:11.5px;font-style:normal;overflow:hidden;vertical-align:top;color:#629755">수평</span><span style="color:#629755;font-style:italic;"> Match_parent </span><span style="display:inline-block;width:11px;font-size:11.5px;font-style:normal;overflow:hidden;vertical-align:top;color:#629755">인</span><span style="color:#629755;font-style:italic;"> LinearLayoutParams </span><span style="display:inline-block;width:22px;font-size:11.5px;font-style:normal;overflow:hidden;vertical-align:top;color:#629755">생성</span><span style="color:#629755;font-style:italic;"> */</span></div>
<div style="left:480px;top:500px;height:22px;line-height:22px;font-family:'Liberation Mono', monospace;font-size:13.33px;color:#A9B7C6;white-space:pre"><span style="color:#A9B7C6;">    </span><span style="color:#CC7832;">fun</span><span style="color:#A9B7C6;"> </span><span style="color:#FFC66D;">getMatchHorizonLinearLayoutParams</span><span style="color:#A9B7C6;">() : LinearLayout.LayoutParams {</span></div>
<div style="left:480px;top:522px;height:22px;line-height:22px;font-family:'Liberation Mono', monospace;font-size:13.33px;color:#A9B7C6;white-space:pre"><span style="color:#A9B7C6;">        </span><span style="color:#CC7832;background:#52503A;display:inline-block;height:22px;vertical-align:top;position:relative;top:-1px;line-height:23px;">var</span><span style="color:#A9B7C6;"> </span><span style="color:#A9B7C6;text-decoration:underline;text-underline-offset:2px;text-decoration-color:#B8B0C8;">params</span><span style="color:#A9B7C6;"> = LinearLayout.LayoutParams(</span></div>
<div style="left:480px;top:544px;height:22px;line-height:22px;font-family:'Liberation Mono', monospace;font-size:13.33px;color:#A9B7C6;white-space:pre"><span style="color:#A9B7C6;">            LinearLayout.LayoutParams.</span><span style="color:#9876AA;font-style:italic;">MATCH_PARENT</span><span style="color:#CC7832;">,</span></div>
<div style="left:480px;top:566px;height:22px;line-height:22px;font-family:'Liberation Mono', monospace;font-size:13.33px;color:#A9B7C6;white-space:pre"><span style="color:#A9B7C6;">            LinearLayout.LayoutParams.</span><span style="color:#9876AA;font-style:italic;">WRAP_CONTENT</span></div>
<div style="left:480px;top:588px;height:22px;line-height:22px;font-family:'Liberation Mono', monospace;font-size:13.33px;color:#A9B7C6;white-space:pre"><span style="color:#A9B7C6;">        )</span></div>
<div style="left:480px;top:610px;height:22px;line-height:22px;font-family:'Liberation Mono', monospace;font-size:13.33px;color:#A9B7C6;white-space:pre"><span style="color:#A9B7C6;">        </span><span style="color:#A9B7C6;text-decoration:underline;text-underline-offset:2px;text-decoration-color:#B8B0C8;">params</span><span style="color:#A9B7C6;">.</span><span style="color:#9876AA;font-style:italic;text-decoration:underline;text-underline-offset:2px;text-decoration-color:#9876AA;">gravity</span><span style="color:#A9B7C6;"> = </span><span style="color:#9876AA;font-style:italic;">CENTER</span></div>
<div style="left:480px;top:632px;height:22px;line-height:22px;font-family:'Liberation Mono', monospace;font-size:13.33px;color:#A9B7C6;white-space:pre"><span style="color:#A9B7C6;">        </span><span style="color:#A9B7C6;text-decoration:underline;text-underline-offset:2px;text-decoration-color:#B8B0C8;">params</span><span style="color:#A9B7C6;">.setMargins(</span><span style="display:inline-block;vertical-align:top;margin:1.5px 2px 0 2px;width:32px;height:17px;line-height:17px;border-radius:4px;background:#3B3B3B;color:#8C8C8C;font-family:'Liberation Sans', sans-serif;font-size:12.3px;text-align:center">left:</span><span style="color:#6897BB;">5</span><span style="color:#CC7832;">,</span><span style="color:#A9B7C6;"> </span><span style="display:inline-block;vertical-align:top;margin:1.5px 2px 0 2px;width:32px;height:17px;line-height:17px;border-radius:4px;background:#3B3B3B;color:#8C8C8C;font-family:'Liberation Sans', sans-serif;font-size:12.3px;text-align:center">top:</span><span style="color:#6897BB;">20</span><span style="color:#CC7832;">,</span><span style="display:inline-block;vertical-align:top;margin:1.5px 2px 0 2px;width:40px;height:17px;line-height:17px;border-radius:4px;background:#3B3B3B;color:#8C8C8C;font-family:'Liberation Sans', sans-serif;font-size:12.3px;text-align:center">right:</span><span style="color:#6897BB;">5</span><span style="color:#CC7832;">,</span><span style="display:inline-block;vertical-align:top;margin:1.5px 2px 0 2px;width:53px;height:17px;line-height:17px;border-radius:4px;background:#3B3B3B;color:#8C8C8C;font-family:'Liberation Sans', sans-serif;font-size:12.3px;text-align:center">bottom:</span><span style="color:#6897BB;">20</span><span style="color:#A9B7C6;">)</span></div>
<div style="left:405px;top:104px;width:31px;height:22px;line-height:22px;text-align:right;font-family:'Liberation Mono', monospace;font-size:13.33px;color:#606366">102</div>
<div style="left:405px;top:126px;width:31px;height:22px;line-height:22px;text-align:right;font-family:'Liberation Mono', monospace;font-size:13.33px;color:#606366">103</div>
<div style="left:405px;top:148px;width:31px;height:22px;line-height:22px;text-align:right;font-family:'Liberation Mono', monospace;font-size:13.33px;color:#606366">104</div>
<div style="left:405px;top:170px;width:31px;height:22px;line-height:22px;text-align:right;font-family:'Liberation Mono', monospace;font-size:13.33px;color:#606366">105</div>
<div style="left:405px;top:192px;width:31px;height:22px;line-height:22px;text-align:right;font-family:'Liberation Mono', monospace;font-size:13.33px;color:#606366">106</div>
<div style="left:405px;top:214px;width:31px;height:22px;line-height:22px;text-align:right;font-family:'Liberation Mono', monospace;font-size:13.33px;color:#606366">107</div>
<div style="left:405px;top:236px;width:31px;height:22px;line-height:22px;text-align:right;font-family:'Liberation Mono', monospace;font-size:13.33px;color:#606366">108</div>
<div style="left:405px;top:258px;width:31px;height:22px;line-height:22px;text-align:right;font-family:'Liberation Mono', monospace;font-size:13.33px;color:#606366">109</div>
<div style="left:405px;top:280px;width:31px;height:22px;line-height:22px;text-align:right;font-family:'Liberation Mono', monospace;font-size:13.33px;color:#606366">110</div>
<div style="left:405px;top:302px;width:31px;height:22px;line-height:22px;text-align:right;font-family:'Liberation Mono', monospace;font-size:13.33px;color:#606366">111</div>
<div style="left:405px;top:324px;width:31px;height:22px;line-height:22px;text-align:right;font-family:'Liberation Mono', monospace;font-size:13.33px;color:#606366">112</div>
<div style="left:405px;top:346px;width:31px;height:22px;line-height:22px;text-align:right;font-family:'Liberation Mono', monospace;font-size:13.33px;color:#606366">113</div>
<div style="left:405px;top:368px;width:31px;height:22px;line-height:22px;text-align:right;font-family:'Liberation Mono', monospace;font-size:13.33px;color:#606366">114</div>
<div style="left:405px;top:390px;width:31px;height:22px;line-height:22px;text-align:right;font-family:'Liberation Mono', monospace;font-size:13.33px;color:#606366">115</div>
<div style="left:405px;top:412px;width:31px;height:22px;line-height:22px;text-align:right;font-family:'Liberation Mono', monospace;font-size:13.33px;color:#606366">116</div>
<div style="left:405px;top:434px;width:31px;height:22px;line-height:22px;text-align:right;font-family:'Liberation Mono', monospace;font-size:13.33px;color:#606366">117</div>
<div style="left:405px;top:456px;width:31px;height:22px;line-height:22px;text-align:right;font-family:'Liberation Mono', monospace;font-size:13.33px;color:#606366">118</div>
<div style="left:405px;top:478px;width:31px;height:22px;line-height:22px;text-align:right;font-family:'Liberation Mono', monospace;font-size:13.33px;color:#A4A3A3">119</div>
<div style="left:405px;top:500px;width:31px;height:22px;line-height:22px;text-align:right;font-family:'Liberation Mono', monospace;font-size:13.33px;color:#606366">120</div>
<div style="left:405px;top:522px;width:31px;height:22px;line-height:22px;text-align:right;font-family:'Liberation Mono', monospace;font-size:13.33px;color:#606366">121</div>
<div style="left:405px;top:544px;width:31px;height:22px;line-height:22px;text-align:right;font-family:'Liberation Mono', monospace;font-size:13.33px;color:#606366">122</div>
<div style="left:405px;top:566px;width:31px;height:22px;line-height:22px;text-align:right;font-family:'Liberation Mono', monospace;font-size:13.33px;color:#606366">123</div>
<div style="left:405px;top:588px;width:31px;height:22px;line-height:22px;text-align:right;font-family:'Liberation Mono', monospace;font-size:13.33px;color:#606366">124</div>
<div style="left:405px;top:610px;width:31px;height:22px;line-height:22px;text-align:right;font-family:'Liberation Mono', monospace;font-size:13.33px;color:#606366">125</div>
<div style="left:405px;top:632px;width:31px;height:22px;line-height:22px;text-align:right;font-family:'Liberation Mono', monospace;font-size:13.33px;color:#606366">126</div>
<div style="left:480px;top:654px;height:22px;line-height:22px;font-family:'Liberation Mono', monospace;font-size:13.33px;color:#A9B7C6;white-space:pre"><span style="color:#A9B7C6;">        </span><span style="color:#CC7832;">return</span><span style="color:#A9B7C6;"> </span><span style="color:#A9B7C6;text-decoration:underline;text-underline-offset:2px;text-decoration-color:#B8B0C8;">params</span></div>
<div style="left:405px;top:654px;width:31px;height:22px;line-height:22px;text-align:right;font-family:'Liberation Mono', monospace;font-size:13.33px;color:#606366">127</div>
<div style="left:409px;top:653px;width:65px;height:8px;background:#313335;"></div>
<div style="left:475px;top:653px;width:1130px;height:8px;background:#2B2B2B;"></div>
<div style="left:510px;top:653px;width:1px;height:8px;background:#393939;"></div>
<div style="left:1280px;top:653px;width:1px;height:8px;background:#3A3A3A;"></div>
<div style="left:562px;top:659px;width:2px;height:2px;background:#7A5A3A;"></div>
<div style="left:416px;top:659px;width:18px;height:2px;background:#3E4042;"></div>
<div style="left:409px;top:661px;width:1196px;height:1px;background:#323232;"></div>
<svg style="left:1449px;top:116px;" width="12" height="12" viewBox="0 0 12 12"><circle cx="6" cy="6" r="5.5" fill="#C9302C"/><rect x="5.1" y="2.5" width="1.8" height="4.5" fill="#2B2B2B"/><rect x="5.1" y="8" width="1.8" height="1.8" fill="#2B2B2B"/></svg>
<div style="left:1463px;top:113.0px;height:20px;line-height:20px;font-size:12.5px;color:#BBBBBB;font-weight:normal;font-family:'Liberation Sans', sans-serif;white-space:pre;">1</div>
<svg style="left:1476px;top:115px;" width="14" height="13" viewBox="0 0 14 13"><path d="M7 0.5 L13.5 12.5 H0.5 Z" fill="#E0AC1E"/><rect x="6.1" y="4.5" width="1.8" height="4" fill="#2B2B2B"/><rect x="6.1" y="9.5" width="1.8" height="1.8" fill="#2B2B2B"/></svg>
<div style="left:1492px;top:113.0px;height:20px;line-height:20px;font-size:12.5px;color:#BBBBBB;font-weight:normal;font-family:'Liberation Sans', sans-serif;white-space:pre;">9</div>
<svg style="left:1506px;top:115px;" width="14" height="13" viewBox="0 0 14 13"><path d="M7 0.5 L13.5 12.5 H0.5 Z" fill="#8C8266"/><rect x="6.1" y="4.5" width="1.8" height="4" fill="#2B2B2B"/><rect x="6.1" y="9.5" width="1.8" height="1.8" fill="#2B2B2B"/></svg>
<div style="left:1522px;top:113.0px;height:20px;line-height:20px;font-size:12.5px;color:#BBBBBB;font-weight:normal;font-family:'Liberation Sans', sans-serif;white-space:pre;">1</div>
<svg style="left:1534px;top:116px;" width="14" height="13" viewBox="0 0 14 13"><path d="M1 5 L4.5 8.5 L12.5 0.8" fill="none" stroke="#3FA34D" stroke-width="2.2"/><path d="M0.5 12 L3 10 L5.5 12 L8 10 L10.5 12 L13 10" fill="none" stroke="#3FA34D" stroke-width="1"/></svg>
<div style="left:1549px;top:113.0px;height:20px;line-height:20px;font-size:12.5px;color:#BBBBBB;font-weight:normal;font-family:'Liberation Sans', sans-serif;white-space:pre;">3</div>
<svg style="left:1567px;top:118px;" width="10" height="7" viewBox="0 0 10 7"><path d="M1 6 L5 1.5 L9 6" fill="none" stroke="#AFB1B3" stroke-width="1.4"/></svg>
<svg style="left:1588px;top:119px;" width="10" height="7" viewBox="0 0 10 7"><path d="M1 1 L5 5.5 L9 1" fill="none" stroke="#AFB1B3" stroke-width="1.4"/></svg>
<div style="left:1594px;top:382px;width:8px;height:56px;background:rgba(120,120,120,0.35);border-radius:4px"></div>
<div style="left:1591px;top:255px;width:14px;height:2px;background:#E0AC1E;"></div>
<div style="left:1591px;top:282px;width:14px;height:2px;background:#8A7F5E;"></div>
<div style="left:1591px;top:354px;width:14px;height:4px;background:#E0AC1E;"></div>
<div style="left:1591px;top:395px;width:14px;height:2px;background:#5E9E6E;"></div>
<div style="left:1591px;top:424px;width:14px;height:2px;background:#E0AC1E;"></div>
<div style="left:1591px;top:451px;width:14px;height:2px;background:#E0AC1E;"></div>
<div style="left:1591px;top:552px;width:14px;height:2px;background:#E0AC1E;"></div>
<div style="left:1591px;top:574px;width:14px;height:2px;background:#E0AC1E;"></div>
<div style="left:1591px;top:595px;width:14px;height:2px;background:#E0AC1E;"></div>
<div style="left:18px;top:662px;width:1587px;height:26px;background:#3C3F41;"></div>
<div style="left:24px;top:666.0px;height:20px;line-height:20px;font-size:13.2px;color:#BBBBBB;font-weight:normal;font-family:'Liberation Sans', sans-serif;white-space:pre;">Build:</div>
<div style="left:77px;top:666.0px;height:20px;line-height:20px;font-size:13.6px;color:#BBBBBB;font-weight:normal;font-family:'Liberation Sans', sans-serif;white-space:pre;">Sync</div>
<svg style="left:114px;top:671px;" width="8" height="8" viewBox="0 0 8 8"><path d="M0.8 0.8 L7.2 7.2 M7.2 0.8 L0.8 7.2" stroke="#6C7073" stroke-width="1.1"/></svg>
<div style="left:145px;top:666.0px;height:20px;line-height:20px;font-size:13.9px;color:#BBBBBB;font-weight:normal;font-family:'Liberation Sans', sans-serif;white-space:pre;">Build Output</div>
<svg style="left:229px;top:671px;" width="8" height="8" viewBox="0 0 8 8"><path d="M0.8 0.8 L7.2 7.2 M7.2 0.8 L0.8 7.2" stroke="#6C7073" stroke-width="1.1"/></svg>
<div style="left:133px;top:685px;width:116px;height:3px;background:#7A7E82;border-radius:2px"></div>
<svg style="left:1559px;top:668px;" width="14" height="14" viewBox="0 0 14 14"><path d="M7 0.5 L8.6 2.2 L10.9 1.7 L11.6 4 L13.6 5.2 L12.6 7 L13.6 8.8 L11.6 10 L10.9 12.3 L8.6 11.8 L7 13.5 L5.4 11.8 L3.1 12.3 L2.4 10 L0.4 8.8 L1.4 7 L0.4 5.2 L2.4 4 L3.1 1.7 L5.4 2.2 Z" fill="#AFB1B3"/><circle cx="7" cy="7" r="2.2" fill="#3C3F41"/></svg>
<div style="left:1586px;top:674px;width:12px;height:2px;background:#AFB1B3;"></div>
<svg style="left:23px;top:696px;" width="16" height="16" viewBox="0 0 16 16"><path d="M1 5 L6 1 L10 3 L8 5 L15 12.5 L13 14.5 L6 7 L3.5 8 Z" fill="#499C54"/></svg>
<div style="left:22px;top:720px;width:20px;height:1px;background:#505355;"></div>
<div style="left:27px;top:732px;width:10px;height:10px;background:#5C5F61;"></div>
<div style="left:22px;top:753px;width:20px;height:1px;background:#505355;"></div>
<svg style="left:24px;top:763px;" width="14" height="14" viewBox="0 0 14 14"><path d="M8 1 L13 6 L11 7 L8 10 L8.5 12 L6.5 12 L2 7.5 L2 5.5 L4 6 L7 3 Z" fill="#AFB1B3"/><path d="M4.5 9.5 L1 13" stroke="#AFB1B3" stroke-width="1.5"/></svg>
<svg style="left:23px;top:789px;" width="18" height="16" viewBox="0 0 18 16"><path d="M1 7 C4 1.5 14 1.5 17 7 C14 12.5 4 12.5 1 7 Z" fill="#AFB1B3"/><circle cx="9" cy="7" r="3" fill="#3C3F41"/><circle cx="9" cy="7" r="1.5" fill="#AFB1B3"/><path d="M13 13 H17 L15 15 Z" fill="#AFB1B3"/></svg>
<svg style="left:55px;top:696px;" width="10" height="7" viewBox="0 0 10 7"><path d="M1 1 L5 5 L9 1" fill="none" stroke="#AFB1B3" stroke-width="1.4"/></svg>
<svg style="left:72px;top:692px;" width="14" height="14" viewBox="0 0 14 14"><circle cx="7" cy="7" r="6.5" fill="#C75450"/><rect x="6" y="3" width="2" height="5" rx="0.5" fill="#3C3F41"/><circle cx="7" cy="10.3" r="1.1" fill="#3C3F41"/></svg>
<div style="left:90px;top:690.0px;height:20px;line-height:20px;font-size:13.3px;color:#BBBBBB;font-weight:bold;font-family:'Liberation Sans', sans-serif;white-space:pre;">Build ChamomileApp:</div>
<div style="left:232px;top:690.0px;height:20px;line-height:20px;font-size:13.0px;color:#BBBBBB;font-weight:normal;font-family:'Liberation Sans', sans-serif;white-space:pre;">failed</div>
<div style="left:269px;top:690.0px;height:20px;line-height:20px;font-size:13.4px;color:#8A8C8E;font-weight:normal;font-family:'Liberation Sans', sans-serif;white-space:pre;">At 2024</div>
<div style="left:317px;top:690.0px;height:20px;line-height:20px;font-size:12.5px;color:#8A8C8E;font-weight:normal;font-family:'Liberation Sans', sans-serif;white-space:pre;">14 sec, 552 ms</div>
<svg style="left:91px;top:712px;" width="13" height="14" viewBox="0 0 13 14"><path d="M6.5 0.5 V9 M2.5 5.5 L6.5 9.5 L10.5 5.5" fill="none" stroke="#AFB1B3" stroke-width="1.5"/><rect x="0.5" y="11.5" width="12" height="1.8" fill="#AFB1B3"/></svg>
<div style="left:108px;top:710.0px;height:20px;line-height:20px;font-size:13.7px;color:#BBBBBB;font-weight:normal;font-family:'Liberation Sans', sans-serif;white-space:pre;">Download info</div>
<svg style="left:73px;top:736px;" width="10" height="7" viewBox="0 0 10 7"><path d="M1 1 L5 5 L9 1" fill="none" stroke="#AFB1B3" stroke-width="1.4"/></svg>
<svg style="left:90px;top:732px;" width="14" height="13" viewBox="0 0 14 13"><path d="M7 0.8 L13.6 12.5 H0.4 Z" fill="#F0A732"/><rect x="6.1" y="4.5" width="1.8" height="4.2" fill="#3C3F41"/><rect x="6.1" y="9.6" width="1.8" height="1.8" fill="#3C3F41"/></svg>
<div style="left:108px;top:730.0px;height:20px;line-height:20px;font-size:13.7px;color:#BBBBBB;font-weight:normal;font-family:'Liberation Sans', sans-serif;white-space:pre;width:258px;overflow:hidden">:app:dataBindingMergeDependencyArtifac</div>
<div style="left:369px;top:730.0px;height:20px;line-height:20px;font-size:12.2px;color:#8A8C8E;font-weight:normal;font-family:'Liberation Sans', sans-serif;white-space:pre;">24 ms</div>
<svg style="left:108px;top:752px;" width="14" height="13" viewBox="0 0 14 13"><path d="M7 0.8 L13.6 12.5 H0.4 Z" fill="#F0A732"/><rect x="6.1" y="4.5" width="1.8" height="4.2" fill="#3C3F41"/><rect x="6.1" y="9.6" width="1.8" height="1.8" fill="#3C3F41"/></svg>
<div style="left:126px;top:750.0px;height:20px;line-height:20px;font-size:13.7px;color:#BBBBBB;font-weight:normal;font-family:'Liberation Sans', sans-serif;white-space:pre;width:280px;overflow:hidden">Your project has set `android.useAndroidX=true`</div>
<svg style="left:75px;top:774px;" width="7" height="10" viewBox="0 0 7 10"><path d="M1 1 L5 5 L1 9" fill="none" stroke="#AFB1B3" stroke-width="1.4"/></svg>
<svg style="left:90px;top:772px;" width="14" height="13" viewBox="0 0 14 13"><path d="M7 0.8 L13.6 12.5 H0.4 Z" fill="#F0A732"/><rect x="6.1" y="4.5" width="1.8" height="4.2" fill="#3C3F41"/><rect x="6.1" y="9.6" width="1.8" height="1.8" fill="#3C3F41"/></svg>
<div style="left:108px;top:770.0px;height:20px;line-height:20px;font-size:13.7px;color:#BBBBBB;font-weight:normal;font-family:'Liberation Sans', sans-serif;white-space:pre;">:app:kaptDebugKotlin</div>
<div style="left:249px;top:770.0px;height:20px;line-height:20px;font-size:13.1px;color:#8A8C8E;font-weight:normal;font-family:'Liberation Sans', sans-serif;white-space:pre;">1 warning</div>
<div style="left:324px;top:770.0px;height:20px;line-height:20px;font-size:12.4px;color:#8A8C8E;font-weight:normal;font-family:'Liberation Sans', sans-serif;white-space:pre;">1 sec, 989 ms</div>
<svg style="left:73px;top:796px;" width="10" height="7" viewBox="0 0 10 7"><path d="M1 1 L5 5 L9 1" fill="none" stroke="#AFB1B3" stroke-width="1.4"/></svg>
<svg style="left:90px;top:792px;" width="14" height="14" viewBox="0 0 14 14"><circle cx="7" cy="7" r="6.5" fill="#C75450"/><rect x="6" y="3" width="2" height="5" rx="0.5" fill="#3C3F41"/><circle cx="7" cy="10.3" r="1.1" fill="#3C3F41"/></svg>
<div style="left:108px;top:790.0px;height:20px;line-height:20px;font-size:13.7px;color:#BBBBBB;font-weight:normal;font-family:'Liberation Sans', sans-serif;white-space:pre;">:app:compileDebugKotlin</div>
<div style="left:269px;top:790.0px;height:20px;line-height:20px;font-size:13.2px;color:#8A8C8E;font-weight:normal;font-family:'Liberation Sans', sans-serif;white-space:pre;">15 errors</div>
<div style="left:325px;top:790.0px;height:20px;line-height:20px;font-size:12.4px;color:#8A8C8E;font-weight:normal;font-family:'Liberation Sans', sans-serif;white-space:pre;">2 sec, 414 ms</div>
<svg style="left:91px;top:816px;" width="10" height="7" viewBox="0 0 10 7"><path d="M1 1 L5 5 L9 1" fill="none" stroke="#AFB1B3" stroke-width="1.4"/></svg>
<svg style="left:110px;top:812px;" width="14" height="14" viewBox="0 0 14 14"><path d="M3 0.5 H8 V5 H12 V13.5 H1 V2.5 Z" fill="#8E9AA3"/><path d="M5.5 6.5 H13.5 L10 10 L13.5 13.5 H5.5 Z" fill="#C7A3F7" stroke="#3C3F41" stroke-width="1"/></svg>
<div style="left:126px;top:810.0px;height:20px;line-height:20px;font-size:13.7px;color:#BBBBBB;font-weight:normal;font-family:'Liberation Sans', sans-serif;white-space:pre;">DialogCompat.kt</div>
<div style="left:232px;top:810.0px;height:20px;line-height:20px;font-size:13.7px;color:#8A8C8E;font-weight:normal;font-family:'Liberation Sans', sans-serif;white-space:pre;width:174px;overflow:hidden">app/src/main/java/com/ldcc/module</div>
<div style="left:47px;top:829px;width:359px;height:20px;background:#0D293E;"></div>
<svg style="left:126px;top:832px;" width="14" height="14" viewBox="0 0 14 14"><circle cx="7" cy="7" r="6.5" fill="#C75450"/><rect x="6" y="3" width="2" height="5" rx="0.5" fill="#0D293E"/><circle cx="7" cy="10.3" r="1.1" fill="#0D293E"/></svg>
<div style="left:144px;top:830.0px;height:20px;line-height:20px;font-size:13.7px;color:#BBBBBB;font-weight:normal;font-family:'Liberation Sans', sans-serif;white-space:pre;width:262px;overflow:hidden">Unresolved reference: Widget_AppCompat_Button</div>
<svg style="left:91px;top:854px;" width="7" height="10" viewBox="0 0 7 10"><path d="M1 1 L5 5 L1 9" fill="none" stroke="#AFB1B3" stroke-width="1.4"/></svg>
<svg style="left:110px;top:852px;" width="14" height="14" viewBox="0 0 14 14"><path d="M3 0.5 H8 V5 H12 V13.5 H1 V2.5 Z" fill="#8E9AA3"/><path d="M5.5 6.5 H13.5 L10 10 L13.5 13.5 H5.5 Z" fill="#C7A3F7" stroke="#3C3F41" stroke-width="1"/></svg>
<div style="left:126px;top:850.0px;height:20px;line-height:20px;font-size:13.7px;color:#BBBBBB;font-weight:normal;font-family:'Liberation Sans', sans-serif;white-space:pre;">NotiCompatModule.kt</div>
<div style="left:261px;top:850.0px;height:20px;line-height:20px;font-size:13.7px;color:#BBBBBB;font-weight:normal;font-family:'Liberation Sans', sans-serif;white-space:pre;"></div>
<svg style="left:91px;top:874px;" width="7" height="10" viewBox="0 0 7 10"><path d="M1 1 L5 5 L1 9" fill="none" stroke="#AFB1B3" stroke-width="1.4"/></svg>
<svg style="left:110px;top:872px;" width="14" height="14" viewBox="0 0 14 14"><path d="M3 0.5 H8 V5 H12 V13.5 H1 V2.5 Z" fill="#8E9AA3"/><path d="M5.5 6.5 H13.5 L10 10 L13.5 13.5 H5.5 Z" fill="#C7A3F7" stroke="#3C3F41" stroke-width="1"/></svg>
<div style="left:126px;top:870.0px;height:20px;line-height:20px;font-size:13.7px;color:#BBBBBB;font-weight:normal;font-family:'Liberation Sans', sans-serif;white-space:pre;">SignPadCompat.kt</div>
<div style="left:244px;top:870.0px;height:20px;line-height:20px;font-size:13.7px;color:#BBBBBB;font-weight:normal;font-family:'Liberation Sans', sans-serif;white-space:pre;"></div>
<svg style="left:91px;top:894px;" width="7" height="10" viewBox="0 0 7 10"><path d="M1 1 L5 5 L1 9" fill="none" stroke="#AFB1B3" stroke-width="1.4"/></svg>
<svg style="left:110px;top:892px;" width="14" height="14" viewBox="0 0 14 14"><path d="M3 0.5 H8 V5 H12 V13.5 H1 V2.5 Z" fill="#8E9AA3"/><path d="M5.5 6.5 H13.5 L10 10 L13.5 13.5 H5.5 Z" fill="#C7A3F7" stroke="#3C3F41" stroke-width="1"/></svg>
<div style="left:126px;top:890.0px;height:20px;line-height:20px;font-size:13.7px;color:#BBBBBB;font-weight:normal;font-family:'Liberation Sans', sans-serif;white-space:pre;">SmsCompat.kt</div>
<div style="left:218px;top:890.0px;height:20px;line-height:20px;font-size:13.7px;color:#BBBBBB;font-weight:normal;font-family:'Liberation Sans', sans-serif;white-space:pre;"></div>
<svg style="left:91px;top:914px;" width="7" height="10" viewBox="0 0 7 10"><path d="M1 1 L5 5 L1 9" fill="none" stroke="#AFB1B3" stroke-width="1.4"/></svg>
<svg style="left:110px;top:912px;" width="14" height="14" viewBox="0 0 14 14"><path d="M3 0.5 H8 V5 H12 V13.5 H1 V2.5 Z" fill="#8E9AA3"/><path d="M5.5 6.5 H13.5 L10 10 L13.5 13.5 H5.5 Z" fill="#C7A3F7" stroke="#3C3F41" stroke-width="1"/></svg>
<div style="left:126px;top:910.0px;height:20px;line-height:20px;font-size:13.7px;color:#BBBBBB;font-weight:normal;font-family:'Liberation Sans', sans-serif;white-space:pre;">Utils.kt</div>
<div style="left:174px;top:910.0px;height:20px;line-height:20px;font-size:13.7px;color:#BBBBBB;font-weight:normal;font-family:'Liberation Sans', sans-serif;white-space:pre;"></div>
<div style="left:265px;top:850.0px;height:20px;line-height:20px;font-size:13.7px;color:#8A8C8E;font-weight:normal;font-family:'Liberation Sans', sans-serif;white-space:pre;width:141px;overflow:hidden">app/src/main/java/com/ldcc</div>
<div style="left:243px;top:870.0px;height:20px;line-height:20px;font-size:13.7px;color:#8A8C8E;font-weight:normal;font-family:'Liberation Sans', sans-serif;white-space:pre;width:163px;overflow:hidden">app/src/main/java/com/ldcc/mo</div>
<div style="left:220px;top:890.0px;height:20px;line-height:20px;font-size:13.7px;color:#8A8C8E;font-weight:normal;font-family:'Liberation Sans', sans-serif;white-space:pre;width:186px;overflow:hidden">app/src/main/java/com/ldcc/module</div>
<div style="left:174px;top:910.0px;height:20px;line-height:20px;font-size:13.7px;color:#8A8C8E;font-weight:normal;font-family:'Liberation Sans', sans-serif;white-space:pre;width:232px;overflow:hidden">app/src/main/java/com/ldcc/module/com</div>
<div style="left:50px;top:942px;width:30px;height:8px;background:#55585A;border-radius:4px"></div>
<div style="left:419px;top:690px;height:22px;line-height:22px;font-family:'Liberation Mono', monospace;font-size:13.33px;white-space:pre"><span style="color:#589DF6;text-decoration:underline;text-underline-offset:2px">/main/java/com/ldcc/module/common_ref_core/flexlibs/module/DialogCompat.kt: (109, 94):</span><span style="color:#FF6B68"> Unresolved reference: Widget_AppCompat_Button_Borderless</span></div>
<div style="left:408px;top:675px;width:1165px;height:44px;background:transparent;box-sizing:border-box;border:3px solid #FF2A1F"></div>
<div style="left:418px;top:939px;width:1145px;height:14px;background:#3C3F41;"></div>
<div style="left:750px;top:942px;width:810px;height:8px;background:#55585A;border-radius:4px"></div>
<svg style="left:1583px;top:697px;" width="15" height="14" viewBox="0 0 15 14"><rect x="0" y="1" width="13" height="1.6" fill="#AFB1B3"/><path d="M0 6.3 H10.5 A2.7 2.7 0 0 1 10.5 11.7 H7" fill="none" stroke="#AFB1B3" stroke-width="1.6"/><path d="M8.5 9.5 L6 11.7 L8.5 14" fill="none" stroke="#AFB1B3" stroke-width="1.4"/><rect x="0" y="10.9" width="4" height="1.6" fill="#AFB1B3"/></svg>
<div style="left:1580px;top:719px;width:22px;height:22px;background:#5A5D5F;border-radius:3px"></div>
<svg style="left:1584px;top:722px;" width="15" height="15" viewBox="0 0 15 15"><rect x="1" y="2" width="5" height="1.6" fill="#C8C8C8"/><rect x="1" y="6" width="5" height="1.6" fill="#C8C8C8"/><path d="M10 1 V9 M7 6 L10 9 L13 6" fill="none" stroke="#C8C8C8" stroke-width="1.5"/><rect x="1" y="11.5" width="13" height="1.8" fill="#C8C8C8"/></svg>
<svg style="left:31px;top:955px;" width="12" height="11" viewBox="0 0 12 11"><path d="M3 1 V11 M9 1 V4 C9 7 3 6 3 9" fill="none" stroke="#AFB1B3" stroke-width="1.5"/></svg>
<div style="left:47px;top:957.0px;height:16px;line-height:16px;font-size:11.8px;color:#BBBBBB;font-weight:normal;font-family:'Liberation Sans', sans-serif;white-space:pre;">Version Control</div>
<svg style="left:148px;top:956px;" width="14" height="10" viewBox="0 0 14 10"><path d="M1 10 A6 6 0 0 1 13 10" fill="none" stroke="#AFB1B3" stroke-width="1.6"/><path d="M7 10 L10 5" stroke="#AFB1B3" stroke-width="1.5"/></svg>
<div style="left:166px;top:957.0px;height:16px;line-height:16px;font-size:11.8px;color:#BBBBBB;font-weight:normal;font-family:'Liberation Sans', sans-serif;white-space:pre;">Profiler</div>
<svg style="left:224px;top:957px;" width="12" height="9" viewBox="0 0 12 9"><rect x="0" y="0" width="11" height="1.6" fill="#AFB1B3"/><rect x="0" y="4" width="7" height="1.6" fill="#AFB1B3"/><rect x="0" y="8" width="9" height="1.6" fill="#AFB1B3"/></svg>
<div style="left:241px;top:957.0px;height:16px;line-height:16px;font-size:11.8px;color:#BBBBBB;font-weight:normal;font-family:'Liberation Sans', sans-serif;white-space:pre;">Logcat</div>
<svg style="left:299px;top:955px;" width="14" height="11" viewBox="0 0 14 11"><path d="M1 3.5 L4 0.7 H10 L13 3.5 L7 10.5 Z M1 3.5 H13 M4.5 3.5 L7 10.5 L9.5 3.5" fill="none" stroke="#AFB1B3" stroke-width="1"/></svg>
<div style="left:317px;top:957.0px;height:16px;line-height:16px;font-size:11.8px;color:#BBBBBB;font-weight:normal;font-family:'Liberation Sans', sans-serif;white-space:pre;">App Quality Insights</div>
<svg style="left:443px;top:956px;" width="13" height="10" viewBox="0 0 13 10"><path d="M1 4 L5 0.8 L9 2.5 L7 4 L12 9.5 L10.5 11 L5.5 5.5 L3 6.5 Z" fill="#C8C8C8"/></svg>
<div style="left:463px;top:957.0px;height:16px;line-height:16px;font-size:11.8px;color:#E0E0E0;font-weight:bold;font-family:'Liberation Sans', sans-serif;white-space:pre;">Build</div>
<svg style="left:509px;top:957px;" width="12" height="9" viewBox="0 0 12 9"><rect x="0" y="0" width="2" height="1.6" fill="#AFB1B3"/><rect x="3.5" y="0" width="8" height="1.6" fill="#AFB1B3"/><rect x="0" y="4" width="2" height="1.6" fill="#AFB1B3"/><rect x="3.5" y="4" width="8" height="1.6" fill="#AFB1B3"/><rect x="0" y="8" width="2" height="1.6" fill="#AFB1B3"/><rect x="3.5" y="8" width="8" height="1.6" fill="#AFB1B3"/></svg>
<div style="left:525px;top:957.0px;height:16px;line-height:16px;font-size:11.8px;color:#BBBBBB;font-weight:normal;font-family:'Liberation Sans', sans-serif;white-space:pre;">TODO</div>
<svg style="left:579px;top:955px;" width="12" height="11" viewBox="0 0 12 11"><circle cx="6" cy="6" r="5.8" fill="#C75450"/><rect x="5.1" y="2.5" width="1.8" height="4.5" fill="#3C3F41"/></svg>
<div style="left:596px;top:957.0px;height:16px;line-height:16px;font-size:11.8px;color:#BBBBBB;font-weight:normal;font-family:'Liberation Sans', sans-serif;white-space:pre;">Problems</div>
<svg style="left:666px;top:956px;" width="13" height="10" viewBox="0 0 13 10"><rect x="0" y="0" width="13" height="11" fill="#AFB1B3"/><path d="M3 2.5 L6 5 L3 7.5" fill="none" stroke="#3C3F41" stroke-width="1.3"/></svg>
<div style="left:684px;top:957.0px;height:16px;line-height:16px;font-size:11.8px;color:#BBBBBB;font-weight:normal;font-family:'Liberation Sans', sans-serif;white-space:pre;">Terminal</div>
<svg style="left:748px;top:955px;" width="14" height="11" viewBox="0 0 14 11"><path d="M7 0.5 L13 4 V11 H1 V4 Z" fill="#AFB1B3"/><path d="M5.5 4 L9.5 6.5 L5.5 9 Z" fill="#3C3F41"/></svg>
<div style="left:766px;top:957.0px;height:16px;line-height:16px;font-size:11.8px;color:#BBBBBB;font-weight:normal;font-family:'Liberation Sans', sans-serif;white-space:pre;">Services</div>
<svg style="left:833px;top:955px;" width="13" height="11" viewBox="0 0 13 11"><path d="M2 11 V6 A4.5 4.5 0 0 1 11 6 V11 Z" fill="#AFB1B3"/><rect x="5.5" y="1" width="2" height="3" fill="#AFB1B3"/></svg>
<div style="left:850px;top:957.0px;height:16px;line-height:16px;font-size:11.8px;color:#BBBBBB;font-weight:normal;font-family:'Liberation Sans', sans-serif;white-space:pre;">App Inspection</div>
<svg style="left:1489px;top:955px;" width="13" height="11" viewBox="0 0 13 11"><rect x="0.7" y="0.7" width="9" height="10" fill="none" stroke="#AFB1B3" stroke-width="1.2"/><rect x="3.7" y="3.7" width="9" height="9" fill="#3C3F41" stroke="#AFB1B3" stroke-width="1.2"/></svg>
<div style="left:1506px;top:957.0px;height:16px;line-height:16px;font-size:11.8px;color:#BBBBBB;font-weight:normal;font-family:'Liberation Sans', sans-serif;white-space:pre;">Layout Inspector</div>
<div style="left:-41.0px;top:103.0px;width:98px;height:16px;line-height:16px;text-align:center;font-size:11.5px;color:#BBBBBB;font-weight:normal;white-space:pre;transform:rotate(-90deg)">Resource Manager</div>
<svg style="left:2px;top:165px;" width="13" height="12" viewBox="0 0 13 12"><path d="M9 0.5 L12.5 5.5 H5.5 Z" fill="#AFB1B3"/><rect x="1" y="6.5" width="5" height="5" fill="#AFB1B3"/><circle cx="9.5" cy="9" r="2.7" fill="#AFB1B3"/></svg>
<div style="left:0px;top:191px;width:17px;height:73px;background:#2B2D2F;"></div>
<div style="left:-10.5px;top:210.5px;width:37px;height:16px;line-height:16px;text-align:center;font-size:11.3px;color:#E6E6E6;font-weight:bold;white-space:pre;transform:rotate(-90deg)">Project</div>
<svg style="left:3px;top:243px;" width="11" height="11" viewBox="0 0 11 11"><path d="M0.5 0.5 H4.5 L6 2 H10.5 V10.5 H0.5 Z" fill="#C8C8C8"/></svg>
<div style="left:-20.5px;top:692.5px;width:57px;height:16px;line-height:16px;text-align:center;font-size:11.4px;color:#BBBBBB;font-weight:normal;white-space:pre;transform:rotate(-90deg)">Bookmarks</div>
<svg style="left:3px;top:734px;" width="11" height="12" viewBox="0 0 11 12"><path d="M1 0.5 H10 V11.5 L5.5 8 L1 11.5 Z" fill="#AFB1B3"/></svg>
<div style="left:-28.0px;top:795.0px;width:72px;height:16px;line-height:16px;text-align:center;font-size:11.8px;color:#BBBBBB;font-weight:normal;white-space:pre;transform:rotate(-90deg)">Build Variants</div>
<svg style="left:2px;top:843px;" width="13" height="11" viewBox="0 0 13 11"><path d="M1 11 A5.5 5.5 0 0 1 12 11 Z" fill="#AFB1B3"/><path d="M3 3.5 L1.8 1 M10 3.5 L11.2 1" stroke="#AFB1B3" stroke-width="1.2"/></svg>
<div style="left:-17.0px;top:891.0px;width:50px;height:16px;line-height:16px;text-align:center;font-size:12.0px;color:#BBBBBB;font-weight:normal;white-space:pre;transform:rotate(-90deg)">Structure</div>
<svg style="left:3px;top:934px;" width="11" height="11" viewBox="0 0 11 11"><rect x="5.5" y="0" width="5" height="5" fill="#AFB1B3"/><rect x="0" y="6" width="5" height="5" fill="#AFB1B3"/><rect x="5.5" y="6" width="5" height="5" fill="#AFB1B3"/></svg>
<div style="left:1570.0px;top:114.0px;width:94px;height:16px;line-height:16px;text-align:center;font-size:11.6px;color:#BBBBBB;white-space:pre;transform:rotate(90deg)">Device Manager</div>
<svg style="left:1607px;top:64px;" width="8" height="13" viewBox="0 0 8 13"><rect x="0.7" y="0.7" width="9" height="11" rx="1" fill="none" stroke="#AFB1B3" stroke-width="1.3"/></svg>
<div style="left:1558.0px;top:251.0px;width:118px;height:16px;line-height:16px;text-align:center;font-size:12.2px;color:#BBBBBB;white-space:pre;transform:rotate(90deg)">App Links Assistant</div>
<svg style="left:1607px;top:191px;" width="8" height="12" viewBox="0 0 8 12"><circle cx="7" cy="6" r="5" fill="none" stroke="#AFB1B3" stroke-width="1.3"/></svg>
<div style="left:1594.0px;top:360.0px;width:46px;height:16px;line-height:16px;text-align:center;font-size:12.0px;color:#BBBBBB;white-space:pre;transform:rotate(90deg)">Gradle</div>
<svg style="left:1607px;top:336px;" width="8" height="11" viewBox="0 0 8 11"><path d="M1 10 C1 5 4 3 8 3.5" fill="none" stroke="#AFB1B3" stroke-width="2.5"/></svg>
<div style="left:1577.0px;top:447.0px;width:80px;height:16px;line-height:16px;text-align:center;font-size:12.3px;color:#BBBBBB;white-space:pre;transform:rotate(90deg)">Notifications</div>
<svg style="left:1607px;top:405px;" width="8" height="13" viewBox="0 0 8 13"><path d="M1 10 C2 8 2 4 7 2.5 V11 Z" fill="#AFB1B3"/></svg>
<div style="left:1574.0px;top:756.0px;width:86px;height:16px;line-height:16px;text-align:center;font-size:11.2px;color:#BBBBBB;white-space:pre;transform:rotate(90deg)">Device Explorer</div>
<svg style="left:1607px;top:712px;" width="8" height="12" viewBox="0 0 8 12"><rect x="0.7" y="0.7" width="9" height="10" fill="none" stroke="#AFB1B3" stroke-width="1.3"/></svg>
<div style="left:1567.0px;top:888.0px;width:100px;height:16px;line-height:16px;text-align:center;font-size:11.9px;color:#BBBBBB;white-space:pre;transform:rotate(90deg)">Running Devices</div>
<svg style="left:1607px;top:838px;" width="8" height="12" viewBox="0 0 8 12"><rect x="0.7" y="0.7" width="9" height="10" fill="none" stroke="#AFB1B3" stroke-width="1.3"/></svg>
</body></html>
